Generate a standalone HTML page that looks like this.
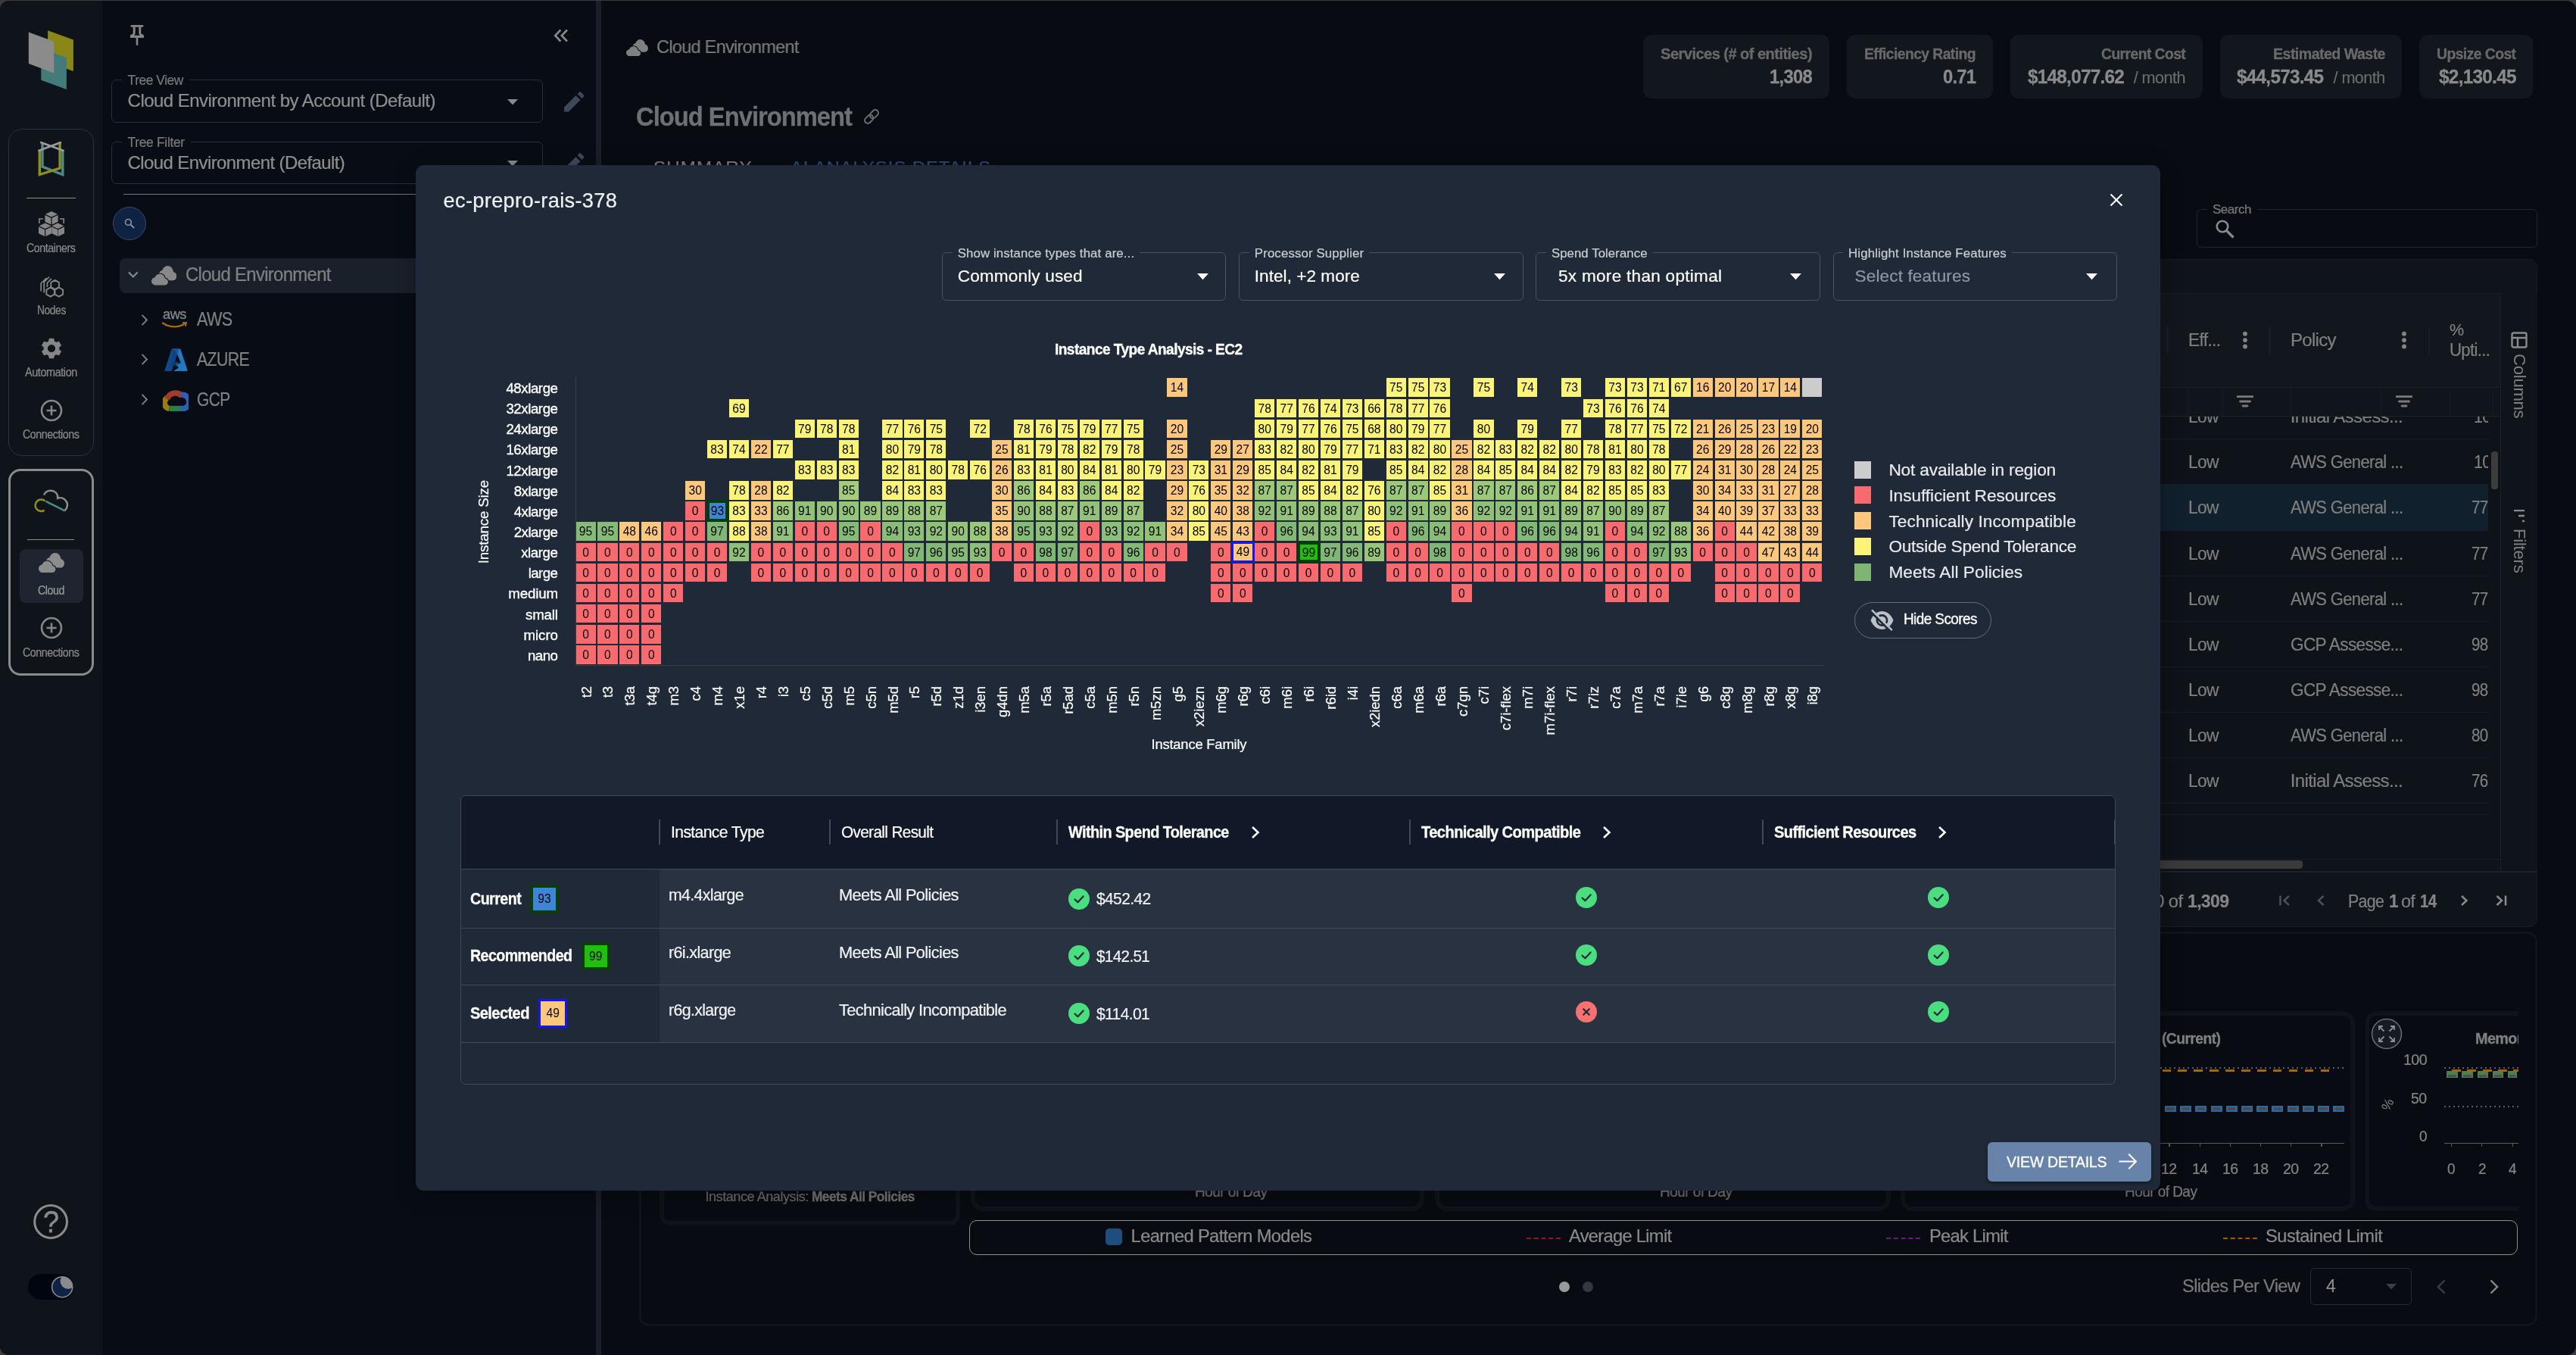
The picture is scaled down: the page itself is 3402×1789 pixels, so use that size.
<!DOCTYPE html>
<html lang="en"><head><meta charset="utf-8"><title>Cloud Environment</title><style>
html,body{margin:0;padding:0}
body{width:3402px;height:1789px;overflow:hidden;background:#3b3b3b;font-family:"Liberation Sans",sans-serif;position:relative}
#win{position:absolute;left:0;top:1px;width:3402px;height:1788px;border-radius:12px;overflow:hidden;background:#080b12}
#inner{position:absolute;left:0;top:-1px;width:3402px;height:1789px;will-change:transform}
.t{position:absolute;white-space:nowrap;line-height:1;color:#fff}
.b{position:absolute;display:block}
.rl{writing-mode:vertical-rl;transform:rotate(180deg);color:#fff}
.c{position:absolute;width:26.3px;height:24.6px;line-height:26.2px;text-align:center;font-size:15.6px;color:#000;box-sizing:border-box}
.c.cur{width:29.6px;height:29px;border:4px solid #063c06;line-height:22.4px}
.c.sel{width:30.8px;height:27.5px;border:3px solid #1515f5;line-height:22.6px}
.bd{position:absolute;box-sizing:border-box;width:37.5px;height:37.5px;text-align:center;color:#000;font-size:15.6px;line-height:30.5px}
</style></head><body>
<div id="win"><div id="inner">
<div class="b" style="left:0.0px;top:0.0px;width:135.0px;height:1789.0px;background:#0f141a;"></div>
<svg class="b" style="left:30.0px;top:34.0px;" width="80.0" height="92.0" viewBox="0 0 80 92"><polygon points="33.1,6.2 66.9,18.4 66.9,60 33.1,47.7" fill="#8a8617"/><polygon points="24.3,29.8 57.9,42.1 57.9,84.1 24.3,71.8" fill="#437b7b"/><polygon points="7.8,8.5 41.3,20.8 41.3,62.4 7.8,49.9" fill="#8b8b8b"/></svg>
<div class="b" style="left:11.4px;top:170.0px;width:112.3px;height:432.0px;border:1px solid #2c323b;border-radius:18px;box-sizing:border-box;"></div>
<svg class="b" style="left:48.0px;top:184.0px;" width="40.0" height="52.0" viewBox="0 0 40 52"><g fill="none" stroke-linejoin="miter"><path d="M8 4.5V36L34.8 46.5V14.5" stroke="#4d8b8b" stroke-width="3.4"/><path d="M4.3 14.5V46.5L31.1 38V4.5" stroke="#8f8f1c" stroke-width="3.4"/><path d="M5.2 3.8L36.6 15.2M32.9 3.8L2.4 15.2" stroke="#9c9c9c" stroke-width="2.6"/></g></svg>
<div class="b" style="left:34.7px;top:261.0px;width:65.3px;height:1.2px;background:#8e8e8e;"></div>
<svg class="b" style="left:50.5px;top:279.0px;" width="34.0" height="33.3" viewBox="0 0 34 33.3"><g fill="#868686"><path d="M17 0L25 3.8L17 7.6L9 3.8Z"/><path d="M8.4 5L16.4 8.8V17.5L8.4 13.7Z"/><path d="M25.6 5L17.6 8.8V17.5L25.6 13.7Z"/>
<path d="M8.6 15.5L16.6 19.3L8.6 23.1L0.6 19.3Z"/><path d="M0 20.5L8 24.3V33L0 29.2Z"/><path d="M17.2 20.5L9.2 24.3V33L17.2 29.2Z"/>
<path d="M25.4 15.5L33.4 19.3L25.4 23.1L17.4 19.3Z"/><path d="M16.8 20.5L24.8 24.3V33L16.8 29.2Z" transform="translate(0.6 0)"/><path d="M34 20.5L26 24.3V33L34 29.2Z"/>
<path d="M0.8 16V10H6" fill="none" stroke="#868686" stroke-width="1.6"/><path d="M33.2 16V10H28" fill="none" stroke="#868686" stroke-width="1.6"/></g></svg>
<div class="t" style="left:35.2px;top:320.23px;font-size:15.75px;color:#8a8a8a;letter-spacing:-0.47px;transform:scaleX(0.9024);transform-origin:0 0;-webkit-text-stroke:0.22px #8a8a8a;">Containers</div>
<svg class="b" style="left:50.0px;top:362.0px;" width="36.0" height="32.0" viewBox="0 0 36 32"><g fill="none" stroke="#868686" stroke-width="1.9" stroke-linejoin="round"><path d="M22.6 7.9L27.9 10.9L27.9 17.0L22.6 20.1L17.3 17.1L17.3 10.9Z"/><path d="M16.6 17.5L21.9 20.6L21.9 26.7L16.6 29.7L11.3 26.7L11.3 20.6Z"/><path d="M27.8 17.5L33.1 20.6L33.1 26.7L27.8 29.7L22.5 26.7L22.5 20.6Z"/><path d="M11.5 5.2L4.2 12V22.5M15 3.5L8.2 10.5V24.5M18 5.8L12.4 11.5V17" stroke-width="1.7"/></g></svg>
<div class="t" style="left:48.6px;top:402.12px;font-size:15.75px;color:#8a8a8a;letter-spacing:-0.47px;transform:scaleX(0.8777);transform-origin:0 0;-webkit-text-stroke:0.22px #8a8a8a;">Nodes</div>
<svg class="b" style="left:52.0px;top:444.0px;" width="32.0" height="32.0" viewBox="0 0 32 32"><path d="M13.46 3.46L18.54 3.46L19.15 6.80L22.39 8.67L25.59 7.53L28.14 11.93L25.55 14.13L25.55 17.87L28.14 20.07L25.59 24.47L22.39 23.33L19.15 25.20L18.54 28.54L13.46 28.54L12.85 25.20L9.61 23.33L6.41 24.47L3.86 20.07L6.45 17.87L6.45 14.13L3.86 11.93L6.41 7.53L9.61 8.67L12.85 6.80Z" fill="#868686" stroke="#868686" stroke-width="1.5" stroke-linejoin="round"/><circle cx="16" cy="16" r="5.12" fill="#0f141a"/></svg>
<div class="t" style="left:33.1px;top:484.23px;font-size:15.75px;color:#8a8a8a;letter-spacing:-0.47px;transform:scaleX(0.9188);transform-origin:0 0;-webkit-text-stroke:0.22px #8a8a8a;">Automation</div>
<svg class="b" style="left:51.8px;top:526.0px;" width="32.0" height="32.0" viewBox="0 0 32 32"><circle cx="16" cy="16" r="13" fill="none" stroke="#868686" stroke-width="2.6"/><path d="M16 9.5V22.5M9.5 16H22.5" stroke="#868686" stroke-width="2.6"/></svg>
<div class="t" style="left:30.2px;top:566.02px;font-size:15.75px;color:#8a8a8a;letter-spacing:-0.47px;transform:scaleX(0.9042);transform-origin:0 0;-webkit-text-stroke:0.22px #8a8a8a;">Connections</div>
<div class="b" style="left:11.0px;top:619.3px;width:112.6px;height:272.7px;border:3px solid #8b8b8b;border-radius:16px;box-sizing:border-box;"></div>
<svg class="b" style="left:42.0px;top:644.0px;" width="52.0" height="36.0" viewBox="0 0 52 36"><g fill="none" stroke-width="2.5" stroke-linecap="butt"><path d="M16.0 9.6C18.0 5.0 22.0 3.6 25.5 3.8C31.0 4.2 34.5 8.0 34.2 13.8C38.0 12.3 42.5 14.0 45.3 17.5C48.3 21.5 47.0 27.0 43.3 30.4" stroke="#8d8d8d"/><path d="M18.5 17.8L43.6 30.4" stroke="#4d8b8b"/><path d="M17.6 17.6A7.7 7.7 0 1 0 16.6 29.6" stroke="#8f8f1c"/></g></svg>
<div class="b" style="left:36.0px;top:712.0px;width:62.0px;height:1.2px;background:#8e8e8e;"></div>
<div class="b" style="left:26.0px;top:725.0px;width:84.0px;height:71.0px;background:#1e2530;border-radius:8px;"></div>
<svg class="b" style="left:50.5px;top:730.0px;" width="34.0" height="26.0" viewBox="0 0 34.0 26.0"><g transform="scale(1.0000)"><g fill="#8c8c8c"><g transform="translate(9.5 0) scale(1.02 1.22)"><path transform="translate(0 0) scale(1)" d="M6 16C2.7 16 0 13.5 0 10.4C0 7.6 2.1 5.3 4.9 4.9C6 2 8.8 0 12 0C15.9 0 19.1 2.9 19.6 6.6C22.1 7 24 9 24 11.4C24 14 21.8 16 19.2 16Z"/></g></g><g fill="#8c8c8c" stroke="#1e2530" stroke-width="2.6" paint-order="stroke"><g transform="translate(0 10.8) scale(0.93 0.95)"><path transform="translate(0 0) scale(1)" d="M6 16C2.7 16 0 13.5 0 10.4C0 7.6 2.1 5.3 4.9 4.9C6 2 8.8 0 12 0C15.9 0 19.1 2.9 19.6 6.6C22.1 7 24 9 24 11.4C24 14 21.8 16 19.2 16Z"/></g></g></g></svg>
<div class="t" style="left:50.0px;top:772.23px;font-size:15.75px;color:#9a9a9a;letter-spacing:-0.47px;transform:scaleX(0.9042);transform-origin:0 0;-webkit-text-stroke:0.22px #9a9a9a;">Cloud</div>
<svg class="b" style="left:51.8px;top:812.6px;" width="32.0" height="32.0" viewBox="0 0 32 32"><circle cx="16" cy="16" r="13" fill="none" stroke="#868686" stroke-width="2.6"/><path d="M16 9.5V22.5M9.5 16H22.5" stroke="#868686" stroke-width="2.6"/></svg>
<div class="t" style="left:30.2px;top:854.02px;font-size:15.75px;color:#8a8a8a;letter-spacing:-0.47px;transform:scaleX(0.9042);transform-origin:0 0;-webkit-text-stroke:0.22px #8a8a8a;">Connections</div>
<svg class="b" style="left:43.0px;top:1589.0px;" width="48.0" height="48.0" viewBox="0 0 48 48"><circle cx="24.1" cy="24" r="21.4" fill="none" stroke="#8b8b8b" stroke-width="3"/></svg>
<div class="t" style="left:56.7px;top:1593.85px;font-size:39.9px;color:#8b8b8b;transform:scaleX(0.9524);transform-origin:0 0;-webkit-text-stroke:0.5px #8b8b8b;">?</div>
<div class="b" style="left:36.9px;top:1682.0px;width:60.3px;height:34.0px;background:#01050f;border-radius:17px;"></div>
<svg class="b" style="left:67.0px;top:1684.0px;" width="31.0" height="31.0" viewBox="0 0 31 31"><defs><clipPath id="tc"><circle cx="15.2" cy="15.2" r="13.6"/></clipPath></defs><circle cx="15.2" cy="15.2" r="13.6" fill="#0e2345"/><circle cx="22.8" cy="7.6" r="10.2" fill="#8b8b8b" clip-path="url(#tc)"/><circle cx="15.2" cy="15.2" r="13.5" fill="none" stroke="#8b8b8b" stroke-width="1.6"/></svg>
<div class="b" style="left:135.0px;top:0.0px;width:652.3px;height:1789.0px;background:#080c14;"></div>
<div class="b" style="left:787.3px;top:0.0px;width:6.7px;height:1789.0px;background:#191e28;"></div>
<svg class="b" style="left:169.0px;top:31.0px;" width="24.0" height="32.0" viewBox="0 0 24 32"><g fill="none" stroke="#878787" stroke-width="2.9" stroke-linecap="round"><path d="M5 3.4H19"/><path d="M8.2 4.5V12.5C8.2 14.4 6.8 15.6 3.6 16.6M15.8 4.5V12.5C15.8 14.4 17.2 15.6 20.4 16.6" stroke-linecap="butt"/><path d="M3 17.3H21" stroke-linecap="butt" stroke-width="3.2"/></g><path d="M10.7 18.5H13.3V27.6L12 29.8L10.7 27.6Z" fill="#878787"/></svg>
<svg class="b" style="left:729.0px;top:37.0px;" width="26.0" height="20.0" viewBox="0 0 26 20"><path d="M11.4 2.5L4.2 10L11.4 17.5M20 2.5L12.8 10L20 17.5" fill="none" stroke="#888" stroke-width="2.6"/></svg>
<div class="b" style="left:146.9px;top:105.3px;width:569.9px;height:56.5px;border:1px solid #2a3039;border-radius:7px;box-sizing:border-box;"></div>
<div class="b" style="left:161.0px;top:103.3px;width:89.4px;height:5.0px;background:#080c14;"></div>
<div class="t" style="left:168.6px;top:98.18px;font-size:17.43px;color:#787878;letter-spacing:-0.46px;-webkit-text-stroke:0.22px #787878;">Tree View</div>
<div class="t" style="left:168.6px;top:121.30px;font-size:24px;color:#8f8f8f;letter-spacing:-0.54px;-webkit-text-stroke:0.22px #8f8f8f;">Cloud Environment by Account (Default)</div>
<svg class="b" style="left:669.5px;top:131.0px;" width="14.0" height="8.0" viewBox="0 0 14 8"><path d="M0 0H14L7 7.5Z" fill="#8a8a8a"/></svg>
<div class="b" style="left:146.9px;top:187.1px;width:569.9px;height:56.3px;border:1px solid #2a3039;border-radius:7px;box-sizing:border-box;"></div>
<div class="b" style="left:161.0px;top:185.1px;width:91.2px;height:5.0px;background:#080c14;"></div>
<div class="t" style="left:168.6px;top:179.99px;font-size:17.43px;color:#787878;letter-spacing:-0.32px;-webkit-text-stroke:0.22px #787878;">Tree Filter</div>
<div class="t" style="left:168.6px;top:203.40px;font-size:24px;color:#8f8f8f;letter-spacing:-0.60px;-webkit-text-stroke:0.22px #8f8f8f;">Cloud Environment (Default)</div>
<svg class="b" style="left:669.5px;top:212.0px;" width="14.0" height="8.0" viewBox="0 0 14 8"><path d="M0 0H14L7 7.5Z" fill="#8a8a8a"/></svg>
<svg class="b" style="left:744.5px;top:120.5px;" width="27.0" height="27.0" viewBox="0 0 27 27"><path d="M0 26.5V20.5L15.5 5L21.5 11L6 26.5Z M17.5 3L20 0.5Q21 -0.3 22 0.5L26 4.5Q26.8 5.5 26 6.5L23.5 9Z" fill="#3d4859"/></svg>
<svg class="b" style="left:744.5px;top:202.0px;" width="27.0" height="27.0" viewBox="0 0 27 27"><path d="M0 26.5V20.5L15.5 5L21.5 11L6 26.5Z M17.5 3L20 0.5Q21 -0.3 22 0.5L26 4.5Q26.8 5.5 26 6.5L23.5 9Z" fill="#3d4859"/></svg>
<div class="b" style="left:162.9px;top:255.7px;width:553.9px;height:1.3px;background:#777;"></div>
<div class="b" style="left:149.2px;top:273.0px;width:44.2px;height:44.4px;background:#0e2244;border:1px solid #3b4a64;border-radius:23px;box-sizing:border-box;"></div>
<svg class="b" style="left:164.3px;top:288.0px;" width="15.0" height="15.0" viewBox="0 0 15 15"><circle cx="5.4" cy="5.4" r="3.9" fill="none" stroke="#8d939d" stroke-width="1.6"/><path d="M8.4 8.4L13 13" stroke="#8d939d" stroke-width="1.9"/></svg>
<div class="b" style="left:158.0px;top:341.0px;width:642.0px;height:45.5px;background:#1a202a;border-radius:8px;"></div>
<svg class="b" style="left:168.0px;top:356.0px;" width="16.0" height="14.0" viewBox="0 0 16 14"><path d="M2 3.5L7.8 9.5L13.6 3.5" fill="none" stroke="#8a8a8a" stroke-width="2.2"/></svg>
<svg class="b" style="left:199.8px;top:351.0px;" width="33.5" height="25.6" viewBox="0 0 33.5 25.6"><g transform="scale(0.9853)"><g fill="#888"><g transform="translate(9.5 0) scale(1.02 1.22)"><path transform="translate(0 0) scale(1)" d="M6 16C2.7 16 0 13.5 0 10.4C0 7.6 2.1 5.3 4.9 4.9C6 2 8.8 0 12 0C15.9 0 19.1 2.9 19.6 6.6C22.1 7 24 9 24 11.4C24 14 21.8 16 19.2 16Z"/></g></g><g fill="#888" stroke="#1a202a" stroke-width="2.6" paint-order="stroke"><g transform="translate(0 10.8) scale(0.93 0.95)"><path transform="translate(0 0) scale(1)" d="M6 16C2.7 16 0 13.5 0 10.4C0 7.6 2.1 5.3 4.9 4.9C6 2 8.8 0 12 0C15.9 0 19.1 2.9 19.6 6.6C22.1 7 24 9 24 11.4C24 14 21.8 16 19.2 16Z"/></g></g></g></svg>
<div class="t" style="left:244.8px;top:350.30px;font-size:25.2px;color:#808080;letter-spacing:-0.76px;transform:scaleX(0.9524);transform-origin:0 0;-webkit-text-stroke:0.22px #808080;">Cloud Environment</div>
<svg class="b" style="left:185.0px;top:413.8px;" width="12.0" height="17.0" viewBox="0 0 12 17"><path d="M2.6 1.8L9 8.5L2.6 15.2" fill="none" stroke="#808080" stroke-width="1.9"/></svg>
<div class="t" style="left:259.9px;top:408.80px;font-size:25.2px;color:#808080;letter-spacing:-0.76px;transform:scaleX(0.8607);transform-origin:0 0;-webkit-text-stroke:0.22px #808080;">AWS</div>
<svg class="b" style="left:185.0px;top:466.0px;" width="12.0" height="17.0" viewBox="0 0 12 17"><path d="M2.6 1.8L9 8.5L2.6 15.2" fill="none" stroke="#808080" stroke-width="1.9"/></svg>
<div class="t" style="left:259.9px;top:462.00px;font-size:25.2px;color:#808080;letter-spacing:-0.76px;transform:scaleX(0.8484);transform-origin:0 0;-webkit-text-stroke:0.22px #808080;">AZURE</div>
<svg class="b" style="left:185.0px;top:519.0px;" width="12.0" height="17.0" viewBox="0 0 12 17"><path d="M2.6 1.8L9 8.5L2.6 15.2" fill="none" stroke="#808080" stroke-width="1.9"/></svg>
<div class="t" style="left:259.9px;top:514.90px;font-size:25.2px;color:#808080;letter-spacing:-0.76px;transform:scaleX(0.8324);transform-origin:0 0;-webkit-text-stroke:0.22px #808080;">GCP</div>
<div class="t" style="left:214.9px;top:406.45px;font-size:18.9px;color:#858585;letter-spacing:-0.57px;transform:scaleX(0.9699);transform-origin:0 0;-webkit-text-stroke:0.35px #858585;">aws</div>
<svg class="b" style="left:214.0px;top:425.3px;" width="34.0" height="10.0" viewBox="0 0 34 10"><path d="M1 1.5C9 7.5 21 8 30 2.5" fill="none" stroke="#a86a14" stroke-width="2.2" stroke-linecap="round"/><path d="M27 1.2L32 1L31 6" fill="none" stroke="#a86a14" stroke-width="1.8"/></svg>
<svg class="b" style="left:216.5px;top:460.4px;" width="31.0" height="30.5" viewBox="0 0 31 30.5"><path d="M10.5 0.5H19.5L10 29Q9.7 30 8.7 30H1.5Q0.2 30 0.7 28.6L9.5 1.5Q9.8 0.5 10.5 0.5Z" fill="#114a8b"/><path d="M11.5 0.5H20.5Q21.3 0.5 21.6 1.5L30.5 28.6Q30.9 30 29.5 30H12L19 25.5L13.5 19.5H22L16.5 6Z" fill="#2378c2" transform="translate(0 0)"/><path d="M10.5 0.5H19.5L14.8 14.5L20.5 21L8.5 25.5Z" fill="#0f3f77" opacity=".6"/></svg>
<svg class="b" style="left:215.0px;top:514.5px;" width="34.0" height="28.0" viewBox="0 0 34 28"><g fill="none" stroke-width="7.4"><path d="M8.5 24.5A7.8 7.8 0 0 1 5.5 10.5" stroke="#9c7b12"/><path d="M5.8 12A11.5 11.5 0 0 1 25.5 8" stroke="#a33a2e"/><path d="M24 6.5A9 9 0 0 1 27.5 24.5H22" stroke="#2f5fb0" /><path d="M8.5 24.5H23" stroke="#2a7f45"/></g></svg>
<svg class="b" style="left:826.5px;top:51.5px;" width="29.0" height="22.2" viewBox="0 0 29.0 22.2"><g transform="scale(0.8529)"><g fill="#808080"><g transform="translate(9.5 0) scale(1.02 1.22)"><path transform="translate(0 0) scale(1)" d="M6 16C2.7 16 0 13.5 0 10.4C0 7.6 2.1 5.3 4.9 4.9C6 2 8.8 0 12 0C15.9 0 19.1 2.9 19.6 6.6C22.1 7 24 9 24 11.4C24 14 21.8 16 19.2 16Z"/></g></g><g fill="#808080" stroke="#080b12" stroke-width="2.6" paint-order="stroke"><g transform="translate(0 10.8) scale(0.93 0.95)"><path transform="translate(0 0) scale(1)" d="M6 16C2.7 16 0 13.5 0 10.4C0 7.6 2.1 5.3 4.9 4.9C6 2 8.8 0 12 0C15.9 0 19.1 2.9 19.6 6.6C22.1 7 24 9 24 11.4C24 14 21.8 16 19.2 16Z"/></g></g></g></svg>
<div class="t" style="left:867.1px;top:51.33px;font-size:23.73px;color:#7c7c7c;letter-spacing:-0.71px;transform:scaleX(0.9899);transform-origin:0 0;-webkit-text-stroke:0.22px #7c7c7c;">Cloud Environment</div>
<div class="t" style="left:839.5px;top:136.60px;font-size:34.4px;color:#6d7075;letter-spacing:-1.03px;transform:scaleX(0.9510);transform-origin:0 0;font-weight:700;-webkit-text-stroke:0.3px #6d7075;">Cloud Environment</div>
<svg class="b" style="left:1139.0px;top:142.0px;" width="24.0" height="24.0" viewBox="0 0 24 24"><g fill="none" stroke="#6d7075" stroke-width="1.9" transform="rotate(-45 12 12)"><rect x="1" y="8" width="12.5" height="8" rx="4"/><rect x="10.5" y="8" width="12.5" height="8" rx="4"/></g></svg>
<div class="t" style="left:862.7px;top:210.41px;font-size:22.37px;color:#7b7b7b;letter-spacing:1.12px;transform:scaleX(1.0733);transform-origin:0 0;-webkit-text-stroke:0.22px #7b7b7b;">SUMMARY</div>
<div class="t" style="left:1043.5px;top:210.41px;font-size:22.37px;color:#2b4c74;letter-spacing:1.12px;transform:scaleX(1.0484);transform-origin:0 0;-webkit-text-stroke:0.22px #2b4c74;">AI ANALYSIS DETAILS</div>
<div class="b" style="left:2170.3px;top:46.0px;width:245.6px;height:84.0px;background:#12161d;border-radius:11px;"></div>
<div class="t" style="left:2193.0px;top:61.11px;font-size:20.58px;color:#696969;letter-spacing:-0.62px;transform:scaleX(0.9825);transform-origin:0 0;font-weight:700;-webkit-text-stroke:0.3px #696969;">Services (# of entities)</div>
<div class="t" style="left:2337.0px;top:88.50px;font-size:25.2px;color:#8a8a8a;letter-spacing:-0.76px;transform:scaleX(0.9444);transform-origin:0 0;font-weight:700;-webkit-text-stroke:0.3px #8a8a8a;">1,308</div>
<div class="b" style="left:2439.1px;top:46.0px;width:192.6px;height:84.0px;background:#12161d;border-radius:11px;"></div>
<div class="t" style="left:2461.9px;top:61.11px;font-size:20.58px;color:#696969;letter-spacing:-0.62px;transform:scaleX(0.9396);transform-origin:0 0;font-weight:700;-webkit-text-stroke:0.3px #696969;">Efficiency Rating</div>
<div class="t" style="left:2565.5px;top:88.50px;font-size:25.2px;color:#8a8a8a;letter-spacing:-0.76px;transform:scaleX(0.9406);transform-origin:0 0;font-weight:700;-webkit-text-stroke:0.3px #8a8a8a;">0.71</div>
<div class="b" style="left:2655.0px;top:46.0px;width:253.7px;height:84.0px;background:#12161d;border-radius:11px;"></div>
<div class="t" style="left:2774.7px;top:61.11px;font-size:20.58px;color:#696969;letter-spacing:-0.62px;transform:scaleX(0.9396);transform-origin:0 0;font-weight:700;-webkit-text-stroke:0.3px #696969;">Current Cost</div>
<div class="t" style="left:2817.7px;top:91.78px;font-size:21.63px;color:#6a6a6a;letter-spacing:-0.56px;-webkit-text-stroke:0.22px #6a6a6a;">/ month</div>
<div class="t" style="left:2677.7px;top:88.50px;font-size:25.2px;color:#8a8a8a;letter-spacing:-0.76px;transform:scaleX(0.9647);transform-origin:0 0;font-weight:700;-webkit-text-stroke:0.3px #8a8a8a;">$148,077.62</div>
<div class="b" style="left:2931.9px;top:46.0px;width:240.6px;height:84.0px;background:#12161d;border-radius:11px;"></div>
<div class="t" style="left:3001.7px;top:61.11px;font-size:20.58px;color:#696969;letter-spacing:-0.62px;transform:scaleX(0.9569);transform-origin:0 0;font-weight:700;-webkit-text-stroke:0.3px #696969;">Estimated Waste</div>
<div class="t" style="left:3081.5px;top:91.78px;font-size:21.63px;color:#6a6a6a;letter-spacing:-0.56px;-webkit-text-stroke:0.22px #6a6a6a;">/ month</div>
<div class="t" style="left:2954.2px;top:88.50px;font-size:25.2px;color:#8a8a8a;letter-spacing:-0.76px;transform:scaleX(0.9655);transform-origin:0 0;font-weight:700;-webkit-text-stroke:0.3px #8a8a8a;">$44,573.45</div>
<div class="b" style="left:3195.3px;top:46.0px;width:150.1px;height:84.0px;background:#12161d;border-radius:11px;"></div>
<div class="t" style="left:3218.1px;top:61.11px;font-size:20.58px;color:#696969;letter-spacing:-0.62px;transform:scaleX(0.9417);transform-origin:0 0;font-weight:700;-webkit-text-stroke:0.3px #696969;">Upsize Cost</div>
<div class="t" style="left:3220.6px;top:88.50px;font-size:25.2px;color:#8a8a8a;letter-spacing:-0.76px;transform:scaleX(0.9674);transform-origin:0 0;font-weight:700;-webkit-text-stroke:0.3px #8a8a8a;">$2,130.45</div>
<div class="b" style="left:2901.0px;top:276.0px;width:450.0px;height:50.5px;border:1px solid #20252e;border-radius:6px;box-sizing:border-box;"></div>
<div class="b" style="left:2915.0px;top:274.0px;width:66.0px;height:6.0px;background:#080b12;"></div>
<div class="t" style="left:2922.3px;top:267.99px;font-size:17.22px;color:#7a7a7a;letter-spacing:-0.52px;transform:scaleX(0.9927);transform-origin:0 0;font-weight:500;-webkit-text-stroke:0.22px #7a7a7a;">Search</div>
<svg class="b" style="left:2925.0px;top:289.0px;" width="28.0" height="26.0" viewBox="0 0 28 26"><circle cx="10" cy="10" r="7.3" fill="none" stroke="#8a8a8a" stroke-width="2.6"/><path d="M15.5 15.5L24.5 24.5" stroke="#8a8a8a" stroke-width="3.2"/></svg>
<div class="b" style="left:845.8px;top:342.2px;width:2505.2px;height:881.4px;background:#0f131a;border:1px solid #181c24;border-radius:11px;box-sizing:border-box;"></div>
<div class="b" style="left:845.8px;top:387.0px;width:2455.8px;height:124.0px;background:#12161d;"></div>
<div class="b" style="left:845.8px;top:386.5px;width:2505.2px;height:1.0px;background:#171c24;"></div>
<div class="b" style="left:845.8px;top:510.5px;width:2455.8px;height:1.0px;background:#1b2029;"></div>
<div class="b" style="left:845.8px;top:511.5px;width:2455.8px;height:37.5px;background:#10141b;"></div>
<div class="b" style="left:845.8px;top:549.0px;width:2455.8px;height:1.0px;background:#1f242c;"></div>
<div class="b" style="left:845.8px;top:550.0px;width:2455.8px;height:584.0px;background:#0e1219;"></div>
<div class="b" style="left:845.8px;top:639.5px;width:2440.7px;height:60.1px;background:#10202c;"></div>
<div class="b" style="left:845.8px;top:579.0px;width:2441.2px;height:1.0px;background:#171c25;"></div>
<div class="b" style="left:845.8px;top:639.0px;width:2441.2px;height:1.0px;background:#171c25;"></div>
<div class="b" style="left:845.8px;top:699.6px;width:2441.2px;height:1.0px;background:#171c25;"></div>
<div class="b" style="left:845.8px;top:759.6px;width:2441.2px;height:1.0px;background:#171c25;"></div>
<div class="b" style="left:845.8px;top:819.7px;width:2441.2px;height:1.0px;background:#171c25;"></div>
<div class="b" style="left:845.8px;top:879.7px;width:2441.2px;height:1.0px;background:#171c25;"></div>
<div class="b" style="left:845.8px;top:939.6px;width:2441.2px;height:1.0px;background:#171c25;"></div>
<div class="b" style="left:845.8px;top:999.7px;width:2441.2px;height:1.0px;background:#171c25;"></div>
<div class="b" style="left:845.8px;top:1059.8px;width:2441.2px;height:1.0px;background:#171c25;"></div>
<div class="b" style="left:845.8px;top:1074.8px;width:2441.2px;height:1.0px;background:#171c25;"></div>
<div class="b" style="left:3301.6px;top:387.0px;width:1.0px;height:763.0px;background:#1a1f27;"></div>
<div class="b" style="left:3302.6px;top:387.0px;width:48.4px;height:763.0px;background:#0f131a;"></div>
<div class="t" style="left:2890.2px;top:437.03px;font-size:24.15px;color:#7f7f7f;letter-spacing:-0.72px;transform:scaleX(0.9431);transform-origin:0 0;-webkit-text-stroke:0.22px #7f7f7f;">Eff...</div>
<div class="t" style="left:3024.8px;top:437.03px;font-size:24.15px;color:#7f7f7f;letter-spacing:-0.72px;transform:scaleX(0.9951);transform-origin:0 0;-webkit-text-stroke:0.22px #7f7f7f;">Policy</div>
<div class="t" style="left:3234.9px;top:424.81px;font-size:22.57px;color:#7f7f7f;transform:scaleX(0.9526);transform-origin:0 0;-webkit-text-stroke:0.22px #7f7f7f;">%</div>
<div class="t" style="left:3234.9px;top:450.03px;font-size:24.15px;color:#7f7f7f;letter-spacing:-0.72px;transform:scaleX(0.9195);transform-origin:0 0;-webkit-text-stroke:0.22px #7f7f7f;">Upti...</div>
<svg class="b" style="left:2960.5px;top:437.0px;" width="8.0" height="26.0" viewBox="0 0 8 26"><circle cx="4" cy="3.7" r="2.9" fill="#858585"/><circle cx="4" cy="12.1" r="2.9" fill="#858585"/><circle cx="4" cy="20.5" r="2.9" fill="#858585"/></svg>
<svg class="b" style="left:2953.5px;top:522.0px;" width="22.0" height="16.0" viewBox="0 0 22 16"><path d="M0.5 1.6H21.5M4.5 8H17.5M8 14H14" stroke="#7a7a7a" stroke-width="2.8" stroke-linecap="round"/></svg>
<svg class="b" style="left:3170.7px;top:437.0px;" width="8.0" height="26.0" viewBox="0 0 8 26"><circle cx="4" cy="3.7" r="2.9" fill="#858585"/><circle cx="4" cy="12.1" r="2.9" fill="#858585"/><circle cx="4" cy="20.5" r="2.9" fill="#858585"/></svg>
<svg class="b" style="left:3163.7px;top:522.0px;" width="22.0" height="16.0" viewBox="0 0 22 16"><path d="M0.5 1.6H21.5M4.5 8H17.5M8 14H14" stroke="#7a7a7a" stroke-width="2.8" stroke-linecap="round"/></svg>
<div class="b" style="left:2861.3px;top:431.0px;width:2.5px;height:36.0px;background:#191d25;"></div>
<div class="b" style="left:2996.0px;top:431.0px;width:2.5px;height:36.0px;background:#191d25;"></div>
<div class="b" style="left:3206.5px;top:431.0px;width:2.5px;height:36.0px;background:#191d25;"></div>
<div class="b" style="left:2890.0px;top:512.0px;width:1.0px;height:37.0px;background:#171c25;"></div>
<div class="b" style="left:2934.5px;top:512.0px;width:1.0px;height:37.0px;background:#171c25;"></div>
<div class="b" style="left:3025.0px;top:512.0px;width:1.0px;height:37.0px;background:#171c25;"></div>
<div class="b" style="left:3144.0px;top:512.0px;width:1.0px;height:37.0px;background:#171c25;"></div>
<div class="b" style="left:3235.0px;top:512.0px;width:1.0px;height:37.0px;background:#171c25;"></div>
<div class="b" style="left:3292.0px;top:512.0px;width:1.0px;height:37.0px;background:#171c25;"></div>
<div class="b" style="left:2853px;top:550px;width:432.8px;height:585px;overflow:hidden">
<div class="t" style="left:37.2px;top:-11.78px;font-size:24.15px;color:#7f7f7f;letter-spacing:-0.72px;transform:scaleX(0.9450);transform-origin:0 0;-webkit-text-stroke:0.22px #7f7f7f;">Low</div>
<div class="t" style="left:171.8px;top:-11.78px;font-size:24.15px;color:#7f7f7f;letter-spacing:-0.67px;-webkit-text-stroke:0.22px #7f7f7f;">Initial Assess...</div>
<div class="t" style="left:413.6px;top:-11.78px;font-size:24.15px;color:#7f7f7f;letter-spacing:-0.72px;transform:scaleX(0.8881);transform-origin:0 0;-webkit-text-stroke:0.22px #7f7f7f;">100</div>
<div class="t" style="left:37.2px;top:48.32px;font-size:24.15px;color:#7f7f7f;letter-spacing:-0.72px;transform:scaleX(0.9450);transform-origin:0 0;-webkit-text-stroke:0.22px #7f7f7f;">Low</div>
<div class="t" style="left:171.8px;top:48.32px;font-size:24.15px;color:#7f7f7f;letter-spacing:-0.72px;transform:scaleX(0.9117);transform-origin:0 0;-webkit-text-stroke:0.22px #7f7f7f;">AWS General ...</div>
<div class="t" style="left:413.6px;top:48.32px;font-size:24.15px;color:#7f7f7f;letter-spacing:-0.72px;transform:scaleX(0.8881);transform-origin:0 0;-webkit-text-stroke:0.22px #7f7f7f;">100</div>
<div class="t" style="left:37.2px;top:108.42px;font-size:24.15px;color:#7f7f7f;letter-spacing:-0.72px;transform:scaleX(0.9450);transform-origin:0 0;-webkit-text-stroke:0.22px #7f7f7f;">Low</div>
<div class="t" style="left:171.8px;top:108.42px;font-size:24.15px;color:#7f7f7f;letter-spacing:-0.72px;transform:scaleX(0.9117);transform-origin:0 0;-webkit-text-stroke:0.22px #7f7f7f;">AWS General ...</div>
<div class="t" style="left:410.6px;top:108.42px;font-size:24.15px;color:#7f7f7f;letter-spacing:-0.72px;transform:scaleX(0.8493);transform-origin:0 0;-webkit-text-stroke:0.22px #7f7f7f;">77</div>
<div class="t" style="left:37.2px;top:168.53px;font-size:24.15px;color:#7f7f7f;letter-spacing:-0.72px;transform:scaleX(0.9450);transform-origin:0 0;-webkit-text-stroke:0.22px #7f7f7f;">Low</div>
<div class="t" style="left:171.8px;top:168.53px;font-size:24.15px;color:#7f7f7f;letter-spacing:-0.72px;transform:scaleX(0.9117);transform-origin:0 0;-webkit-text-stroke:0.22px #7f7f7f;">AWS General ...</div>
<div class="t" style="left:410.6px;top:168.53px;font-size:24.15px;color:#7f7f7f;letter-spacing:-0.72px;transform:scaleX(0.8493);transform-origin:0 0;-webkit-text-stroke:0.22px #7f7f7f;">77</div>
<div class="t" style="left:37.2px;top:228.62px;font-size:24.15px;color:#7f7f7f;letter-spacing:-0.72px;transform:scaleX(0.9450);transform-origin:0 0;-webkit-text-stroke:0.22px #7f7f7f;">Low</div>
<div class="t" style="left:171.8px;top:228.62px;font-size:24.15px;color:#7f7f7f;letter-spacing:-0.72px;transform:scaleX(0.9117);transform-origin:0 0;-webkit-text-stroke:0.22px #7f7f7f;">AWS General ...</div>
<div class="t" style="left:410.6px;top:228.62px;font-size:24.15px;color:#7f7f7f;letter-spacing:-0.72px;transform:scaleX(0.8493);transform-origin:0 0;-webkit-text-stroke:0.22px #7f7f7f;">77</div>
<div class="t" style="left:37.2px;top:288.72px;font-size:24.15px;color:#7f7f7f;letter-spacing:-0.72px;transform:scaleX(0.9450);transform-origin:0 0;-webkit-text-stroke:0.22px #7f7f7f;">Low</div>
<div class="t" style="left:171.8px;top:288.72px;font-size:24.15px;color:#7f7f7f;letter-spacing:-0.72px;transform:scaleX(0.9356);transform-origin:0 0;-webkit-text-stroke:0.22px #7f7f7f;">GCP Assesse...</div>
<div class="t" style="left:410.6px;top:288.72px;font-size:24.15px;color:#7f7f7f;letter-spacing:-0.72px;transform:scaleX(0.8493);transform-origin:0 0;-webkit-text-stroke:0.22px #7f7f7f;">98</div>
<div class="t" style="left:37.2px;top:348.82px;font-size:24.15px;color:#7f7f7f;letter-spacing:-0.72px;transform:scaleX(0.9450);transform-origin:0 0;-webkit-text-stroke:0.22px #7f7f7f;">Low</div>
<div class="t" style="left:171.8px;top:348.82px;font-size:24.15px;color:#7f7f7f;letter-spacing:-0.72px;transform:scaleX(0.9356);transform-origin:0 0;-webkit-text-stroke:0.22px #7f7f7f;">GCP Assesse...</div>
<div class="t" style="left:410.6px;top:348.82px;font-size:24.15px;color:#7f7f7f;letter-spacing:-0.72px;transform:scaleX(0.8493);transform-origin:0 0;-webkit-text-stroke:0.22px #7f7f7f;">98</div>
<div class="t" style="left:37.2px;top:408.93px;font-size:24.15px;color:#7f7f7f;letter-spacing:-0.72px;transform:scaleX(0.9450);transform-origin:0 0;-webkit-text-stroke:0.22px #7f7f7f;">Low</div>
<div class="t" style="left:171.8px;top:408.93px;font-size:24.15px;color:#7f7f7f;letter-spacing:-0.72px;transform:scaleX(0.9117);transform-origin:0 0;-webkit-text-stroke:0.22px #7f7f7f;">AWS General ...</div>
<div class="t" style="left:410.6px;top:408.93px;font-size:24.15px;color:#7f7f7f;letter-spacing:-0.72px;transform:scaleX(0.8493);transform-origin:0 0;-webkit-text-stroke:0.22px #7f7f7f;">80</div>
<div class="t" style="left:37.2px;top:469.03px;font-size:24.15px;color:#7f7f7f;letter-spacing:-0.72px;transform:scaleX(0.9450);transform-origin:0 0;-webkit-text-stroke:0.22px #7f7f7f;">Low</div>
<div class="t" style="left:171.8px;top:469.03px;font-size:24.15px;color:#7f7f7f;letter-spacing:-0.67px;-webkit-text-stroke:0.22px #7f7f7f;">Initial Assess...</div>
<div class="t" style="left:410.6px;top:469.03px;font-size:24.15px;color:#7f7f7f;letter-spacing:-0.72px;transform:scaleX(0.8493);transform-origin:0 0;-webkit-text-stroke:0.22px #7f7f7f;">76</div>
</div>
<div class="b" style="left:3289.5px;top:596.0px;width:9.0px;height:50.0px;background:#3c3c3c;border-radius:4px;"></div>
<svg class="b" style="left:3316.0px;top:438.0px;" width="22.0" height="22.0" viewBox="0 0 22 22"><rect x="1.5" y="1.5" width="19" height="19" rx="2" fill="none" stroke="#8a8a8a" stroke-width="2.4"/><path d="M1.5 8H20.5M9 8V20.5" stroke="#8a8a8a" stroke-width="2.4"/></svg>
<div class="t" style="left:3316px;top:467px;font-size:22px;color:#808080;writing-mode:vertical-rl;letter-spacing:-0.2px">Columns</div>
<svg class="b" style="left:3316.0px;top:673.0px;" width="22.0" height="18.0" viewBox="0 0 22 18"><path d="M3 2V16M10 2V10M17 2V5" stroke="#8a8a8a" stroke-width="2.6" transform="rotate(90 11 9) translate(0 0)"/></svg>
<div class="t" style="left:3316px;top:698px;font-size:22px;color:#808080;writing-mode:vertical-rl;letter-spacing:-0.2px">Filters</div>
<div class="b" style="left:845.8px;top:1134.0px;width:2455.8px;height:1.0px;background:#171c25;"></div>
<div class="b" style="left:2700.0px;top:1135.5px;width:341.0px;height:11.5px;background:#3a3a3a;border-radius:4px;"></div>
<div class="b" style="left:845.8px;top:1150.0px;width:2505.2px;height:1.5px;background:#1c212a;"></div>
<div class="t" style="left:2889.0px;top:1178.73px;font-size:23.73px;color:#858585;letter-spacing:-0.71px;transform:scaleX(0.9728);transform-origin:0 0;font-weight:700;-webkit-text-stroke:0.22px #858585;">1,309</div>
<div class="t" style="left:2845.3px;top:1178.73px;font-size:23.73px;color:#808080;letter-spacing:-0.63px;-webkit-text-stroke:0.22px #808080;">0 of</div>
<svg class="b" style="left:3008.5px;top:1180.0px;" width="18.0" height="18.0" viewBox="0 0 18 18"><path d="M2.5 2.5V15.5M14 3L7.5 9L14 15" fill="none" stroke="#4d5056" stroke-width="2.5"/></svg>
<svg class="b" style="left:3057.0px;top:1180.0px;" width="18.0" height="18.0" viewBox="0 0 18 18"><path d="M11.5 3L5 9L11.5 15" fill="none" stroke="#4d5056" stroke-width="2.5"/></svg>
<div class="t" style="left:3101.0px;top:1178.73px;font-size:23.73px;color:#808080;letter-spacing:-0.71px;transform:scaleX(0.9008);transform-origin:0 0;-webkit-text-stroke:0.22px #808080;">Page</div>
<div class="t" style="left:3155.0px;top:1178.73px;font-size:23.73px;color:#858585;transform:scaleX(0.9524);transform-origin:0 0;font-weight:700;-webkit-text-stroke:0.22px #858585;">1</div>
<div class="t" style="left:3170.5px;top:1178.73px;font-size:23.73px;color:#808080;letter-spacing:-0.71px;transform:scaleX(0.9879);transform-origin:0 0;-webkit-text-stroke:0.22px #808080;">of</div>
<div class="t" style="left:3196.0px;top:1178.73px;font-size:23.73px;color:#858585;letter-spacing:-0.71px;transform:scaleX(0.8644);transform-origin:0 0;font-weight:700;-webkit-text-stroke:0.22px #858585;">14</div>
<svg class="b" style="left:3245.0px;top:1180.0px;" width="18.0" height="18.0" viewBox="0 0 18 18"><path d="M6 3L12.5 9L6 15" fill="none" stroke="#8a8a8a" stroke-width="2.5"/></svg>
<svg class="b" style="left:3294.0px;top:1180.0px;" width="18.0" height="18.0" viewBox="0 0 18 18"><path d="M3.5 3L10 9L3.5 15M15 2.5V15.5" fill="none" stroke="#8a8a8a" stroke-width="2.5"/></svg>
<div class="b" style="left:844.3px;top:1229.5px;width:2507.2px;height:521.0px;border:3px solid #10141b;border-radius:13px;box-sizing:border-box;"></div>
<div class="b" style="left:870.5px;top:1300.0px;width:397.5px;height:317.5px;border:6.5px solid #10141a;border-radius:14px;box-sizing:border-box;"></div>
<div class="t" style="left:931.4px;top:1571.07px;font-size:18.06px;color:#696969;letter-spacing:-0.44px;-webkit-text-stroke:0.22px #696969;">Instance Analysis:</div>
<div class="t" style="left:1071.5px;top:1571.07px;font-size:18.06px;color:#727272;letter-spacing:-0.54px;transform:scaleX(0.9566);transform-origin:0 0;font-weight:700;-webkit-text-stroke:0.3px #727272;">Meets All Policies</div>
<div class="b" style="left:1281.5px;top:1335.0px;width:599.5px;height:263.5px;border:6.5px solid #10141a;border-radius:16px;box-sizing:border-box;"></div>
<div class="b" style="left:1894.5px;top:1335.0px;width:602.1px;height:263.5px;border:6.5px solid #10141a;border-radius:16px;box-sizing:border-box;"></div>
<div class="b" style="left:2510.4px;top:1335.0px;width:599.4px;height:263.5px;border:6.5px solid #10141a;border-radius:16px;box-sizing:border-box;"></div>
<div class="b" style="left:3123.4px;top:1335.0px;width:236.6px;height:263.5px;border:6.5px solid #10141a;border-radius:16px;box-sizing:border-box;clip-path:inset(0 34px 0 0);"></div>
<div class="t" style="left:1578.0px;top:1563.62px;font-size:19.95px;color:#777;letter-spacing:-0.60px;transform:scaleX(0.9556);transform-origin:0 0;font-weight:500;-webkit-text-stroke:0.22px #777;">Hour of Day</div>
<div class="t" style="left:2192.0px;top:1563.62px;font-size:19.95px;color:#777;letter-spacing:-0.60px;transform:scaleX(0.9556);transform-origin:0 0;font-weight:500;-webkit-text-stroke:0.22px #777;">Hour of Day</div>
<div class="t" style="left:2805.7px;top:1563.62px;font-size:19.95px;color:#777;letter-spacing:-0.60px;transform:scaleX(0.9556);transform-origin:0 0;font-weight:500;-webkit-text-stroke:0.22px #777;">Hour of Day</div>
<div class="t" style="left:2855.3px;top:1360.81px;font-size:20.58px;color:#808080;letter-spacing:-0.62px;transform:scaleX(0.9387);transform-origin:0 0;font-weight:700;-webkit-text-stroke:0.3px #808080;">(Current)</div>
<div class="b" style="left:2853.0px;top:1409.0px;width:243.0px;height:1.6px;background:repeating-linear-gradient(90deg,#5a5d63 0 1.8px,transparent 1.8px 6px);"></div>
<div class="b" style="left:2855.5px;top:1411.6px;width:11.7px;height:3.0px;background:#a5670b;"></div>
<div class="b" style="left:2876.4px;top:1411.6px;width:11.7px;height:3.0px;background:#a5670b;"></div>
<div class="b" style="left:2897.3px;top:1411.6px;width:11.7px;height:3.0px;background:#a5670b;"></div>
<div class="b" style="left:2918.2px;top:1411.6px;width:11.7px;height:3.0px;background:#a5670b;"></div>
<div class="b" style="left:2939.1px;top:1411.6px;width:11.7px;height:3.0px;background:#a5670b;"></div>
<div class="b" style="left:2960.0px;top:1411.6px;width:11.7px;height:3.0px;background:#a5670b;"></div>
<div class="b" style="left:2980.9px;top:1411.6px;width:11.7px;height:3.0px;background:#a5670b;"></div>
<div class="b" style="left:3001.8px;top:1411.6px;width:11.7px;height:3.0px;background:#a5670b;"></div>
<div class="b" style="left:3022.7px;top:1411.6px;width:11.7px;height:3.0px;background:#a5670b;"></div>
<div class="b" style="left:3043.6px;top:1411.6px;width:11.7px;height:3.0px;background:#a5670b;"></div>
<div class="b" style="left:3064.5px;top:1411.6px;width:11.7px;height:3.0px;background:#a5670b;"></div>
<div class="b" style="left:2859.0px;top:1460.0px;width:15.0px;height:8.0px;background:#2c689a;"></div>
<div class="b" style="left:2861.3px;top:1462.3px;width:10.4px;height:3.5px;background:#474c55;"></div>
<div class="b" style="left:2879.2px;top:1460.0px;width:15.0px;height:8.0px;background:#2c689a;"></div>
<div class="b" style="left:2881.5px;top:1462.3px;width:10.4px;height:3.5px;background:#474c55;"></div>
<div class="b" style="left:2899.4px;top:1460.0px;width:15.0px;height:8.0px;background:#2c689a;"></div>
<div class="b" style="left:2901.7px;top:1462.3px;width:10.4px;height:3.5px;background:#474c55;"></div>
<div class="b" style="left:2919.6px;top:1460.0px;width:15.0px;height:8.0px;background:#2c689a;"></div>
<div class="b" style="left:2921.9px;top:1462.3px;width:10.4px;height:3.5px;background:#474c55;"></div>
<div class="b" style="left:2939.8px;top:1460.0px;width:15.0px;height:8.0px;background:#2c689a;"></div>
<div class="b" style="left:2942.1px;top:1462.3px;width:10.4px;height:3.5px;background:#474c55;"></div>
<div class="b" style="left:2960.0px;top:1460.0px;width:15.0px;height:8.0px;background:#2c689a;"></div>
<div class="b" style="left:2962.3px;top:1462.3px;width:10.4px;height:3.5px;background:#474c55;"></div>
<div class="b" style="left:2980.2px;top:1460.0px;width:15.0px;height:8.0px;background:#2c689a;"></div>
<div class="b" style="left:2982.5px;top:1462.3px;width:10.4px;height:3.5px;background:#474c55;"></div>
<div class="b" style="left:3000.4px;top:1460.0px;width:15.0px;height:8.0px;background:#2c689a;"></div>
<div class="b" style="left:3002.7px;top:1462.3px;width:10.4px;height:3.5px;background:#474c55;"></div>
<div class="b" style="left:3020.6px;top:1460.0px;width:15.0px;height:8.0px;background:#2c689a;"></div>
<div class="b" style="left:3022.9px;top:1462.3px;width:10.4px;height:3.5px;background:#474c55;"></div>
<div class="b" style="left:3040.8px;top:1460.0px;width:15.0px;height:8.0px;background:#2c689a;"></div>
<div class="b" style="left:3043.1px;top:1462.3px;width:10.4px;height:3.5px;background:#474c55;"></div>
<div class="b" style="left:3061.0px;top:1460.0px;width:15.0px;height:8.0px;background:#2c689a;"></div>
<div class="b" style="left:3063.3px;top:1462.3px;width:10.4px;height:3.5px;background:#474c55;"></div>
<div class="b" style="left:3081.2px;top:1460.0px;width:15.0px;height:8.0px;background:#2c689a;"></div>
<div class="b" style="left:3083.5px;top:1462.3px;width:10.4px;height:3.5px;background:#474c55;"></div>
<div class="b" style="left:2853.0px;top:1509.0px;width:243.0px;height:1.2px;background:#5a5a5a;"></div>
<div class="b" style="left:2864.4px;top:1510.0px;width:1.2px;height:4.0px;background:#5a5a5a;"></div>
<div class="t" style="left:2854.4px;top:1534.12px;font-size:19.95px;color:#858585;letter-spacing:-0.60px;transform:scaleX(0.9788);transform-origin:0 0;-webkit-text-stroke:0.22px #858585;">12</div>
<div class="b" style="left:2904.6px;top:1510.0px;width:1.2px;height:4.0px;background:#5a5a5a;"></div>
<div class="t" style="left:2894.6px;top:1534.12px;font-size:19.95px;color:#858585;letter-spacing:-0.60px;transform:scaleX(0.9788);transform-origin:0 0;-webkit-text-stroke:0.22px #858585;">14</div>
<div class="b" style="left:2944.8px;top:1510.0px;width:1.2px;height:4.0px;background:#5a5a5a;"></div>
<div class="t" style="left:2934.8px;top:1534.12px;font-size:19.95px;color:#858585;letter-spacing:-0.60px;transform:scaleX(0.9788);transform-origin:0 0;-webkit-text-stroke:0.22px #858585;">16</div>
<div class="b" style="left:2985.0px;top:1510.0px;width:1.2px;height:4.0px;background:#5a5a5a;"></div>
<div class="t" style="left:2975.0px;top:1534.12px;font-size:19.95px;color:#858585;letter-spacing:-0.60px;transform:scaleX(0.9788);transform-origin:0 0;-webkit-text-stroke:0.22px #858585;">18</div>
<div class="b" style="left:3025.2px;top:1510.0px;width:1.2px;height:4.0px;background:#5a5a5a;"></div>
<div class="t" style="left:3015.2px;top:1534.12px;font-size:19.95px;color:#858585;letter-spacing:-0.60px;transform:scaleX(0.9788);transform-origin:0 0;-webkit-text-stroke:0.22px #858585;">20</div>
<div class="b" style="left:3065.4px;top:1510.0px;width:1.2px;height:4.0px;background:#5a5a5a;"></div>
<div class="t" style="left:3055.4px;top:1534.12px;font-size:19.95px;color:#858585;letter-spacing:-0.60px;transform:scaleX(0.9788);transform-origin:0 0;-webkit-text-stroke:0.22px #858585;">22</div>
<svg class="b" style="left:3131.0px;top:1344.0px;" width="42.0" height="42.0" viewBox="0 0 42 42"><circle cx="21" cy="21" r="19.5" fill="#161a22" stroke="#6a6e76" stroke-width="1.5"/><g fill="none" stroke="#8a8f98" stroke-width="1.8"><path d="M11 16V11H16M12 12L17.5 17.5"/><path d="M31 16V11H26M30 12L24.5 17.5"/><path d="M11 26V31H16M12 30L17.5 24.5"/><path d="M31 26V31H26M30 30L24.5 24.5"/></g></svg>
<div class="b" style="left:3260px;top:1355px;width:66px;height:40px;overflow:hidden"><div class="t" style="left:8.8px;top:5.81px;font-size:20.58px;color:#808080;letter-spacing:-0.62px;transform:scaleX(0.9627);transform-origin:0 0;font-weight:700;-webkit-text-stroke:0.3px #808080;">Memory</div>
</div>
<div class="t" style="left:3173.8px;top:1390.12px;font-size:19.95px;color:#858585;letter-spacing:-0.60px;transform:scaleX(0.9879);transform-origin:0 0;-webkit-text-stroke:0.22px #858585;">100</div>
<div class="t" style="left:3184.4px;top:1441.12px;font-size:19.95px;color:#858585;letter-spacing:-0.60px;transform:scaleX(0.9788);transform-origin:0 0;-webkit-text-stroke:0.22px #858585;">50</div>
<div class="t" style="left:3194.9px;top:1491.12px;font-size:19.95px;color:#858585;transform:scaleX(0.9524);transform-origin:0 0;-webkit-text-stroke:0.22px #858585;">0</div>
<div class="t" style="left:3146px;top:1450px;font-size:17.5px;color:#858585;transform:rotate(-62deg)">%</div>
<div class="b" style="left:3228.0px;top:1409.0px;width:98.0px;height:1.6px;background:repeating-linear-gradient(90deg,#5a5d63 0 1.8px,transparent 1.8px 6px);"></div>
<div class="b" style="left:3228.0px;top:1460.0px;width:98.0px;height:1.6px;background:repeating-linear-gradient(90deg,#5a5d63 0 1.8px,transparent 1.8px 6px);"></div>
<div class="b" style="left:3231.0px;top:1413.5px;width:14.5px;height:9.0px;background:#4a7f4e;"></div>
<div class="b" style="left:3233.0px;top:1419.0px;width:10.5px;height:2.5px;background:#4b5058;"></div>
<div class="b" style="left:3238.0px;top:1411.8px;width:12.0px;height:2.8px;background:#a5670b;"></div>
<div class="b" style="left:3251.3px;top:1413.5px;width:14.5px;height:9.0px;background:#4a7f4e;"></div>
<div class="b" style="left:3253.3px;top:1419.0px;width:10.5px;height:2.5px;background:#4b5058;"></div>
<div class="b" style="left:3258.3px;top:1411.8px;width:12.0px;height:2.8px;background:#a5670b;"></div>
<div class="b" style="left:3271.6px;top:1413.5px;width:14.5px;height:9.0px;background:#4a7f4e;"></div>
<div class="b" style="left:3273.6px;top:1419.0px;width:10.5px;height:2.5px;background:#4b5058;"></div>
<div class="b" style="left:3278.6px;top:1411.8px;width:12.0px;height:2.8px;background:#a5670b;"></div>
<div class="b" style="left:3291.9px;top:1413.5px;width:14.5px;height:9.0px;background:#4a7f4e;"></div>
<div class="b" style="left:3293.9px;top:1419.0px;width:10.5px;height:2.5px;background:#4b5058;"></div>
<div class="b" style="left:3298.9px;top:1411.8px;width:12.0px;height:2.8px;background:#a5670b;"></div>
<div class="b" style="left:3312.2px;top:1413.5px;width:12.0px;height:9.0px;background:#4a7f4e;"></div>
<div class="b" style="left:3314.2px;top:1419.0px;width:8.0px;height:2.5px;background:#4b5058;"></div>
<div class="b" style="left:3319.2px;top:1411.8px;width:6.8px;height:2.8px;background:#a5670b;"></div>
<div class="b" style="left:3228.0px;top:1509.0px;width:98.0px;height:1.2px;background:#5a5a5a;"></div>
<div class="b" style="left:3237.1px;top:1510.0px;width:1.2px;height:4.0px;background:#5a5a5a;"></div>
<div class="t" style="left:3232.4px;top:1534.12px;font-size:19.95px;color:#858585;transform:scaleX(0.9524);transform-origin:0 0;-webkit-text-stroke:0.22px #858585;">0</div>
<div class="b" style="left:3277.3px;top:1510.0px;width:1.2px;height:4.0px;background:#5a5a5a;"></div>
<div class="t" style="left:3272.6px;top:1534.12px;font-size:19.95px;color:#858585;transform:scaleX(0.9524);transform-origin:0 0;-webkit-text-stroke:0.22px #858585;">2</div>
<div class="b" style="left:3317.5px;top:1510.0px;width:1.2px;height:4.0px;background:#5a5a5a;"></div>
<div class="t" style="left:3312.8px;top:1534.12px;font-size:19.95px;color:#858585;transform:scaleX(0.9524);transform-origin:0 0;-webkit-text-stroke:0.22px #858585;">4</div>
<div class="b" style="left:1280.4px;top:1610.8px;width:2045.1px;height:46.4px;border:1px solid #8f8f8f;border-radius:10px;box-sizing:border-box;"></div>
<div class="b" style="left:1459.8px;top:1622.0px;width:22.2px;height:22.0px;background:#1f4e7c;border-radius:5px;"></div>
<div class="t" style="left:1493.6px;top:1621.23px;font-size:23.73px;color:#8a8a8a;letter-spacing:-0.66px;-webkit-text-stroke:0.22px #8a8a8a;">Learned Pattern Models</div>
<div class="b" style="left:2016px;top:1634px;width:45px;height:0;border-top:2px dashed #8a1c2a"></div>
<div class="t" style="left:2072.0px;top:1621.23px;font-size:23.73px;color:#8a8a8a;letter-spacing:-0.71px;-webkit-text-stroke:0.22px #8a8a8a;">Average Limit</div>
<div class="b" style="left:2491px;top:1634px;width:45px;height:0;border-top:2px dashed #6a1c7a"></div>
<div class="t" style="left:2548.0px;top:1621.23px;font-size:23.73px;color:#8a8a8a;letter-spacing:-0.71px;-webkit-text-stroke:0.22px #8a8a8a;">Peak Limit</div>
<div class="b" style="left:2935.8px;top:1634px;width:45px;height:0;border-top:2px dashed #9a5a0a"></div>
<div class="t" style="left:2992.0px;top:1621.23px;font-size:23.73px;color:#8a8a8a;letter-spacing:-0.53px;-webkit-text-stroke:0.22px #8a8a8a;">Sustained Limit</div>
<div class="b" style="left:2058.6px;top:1692.0px;width:14.0px;height:14.0px;background:#9a9a9a;border-radius:7px;"></div>
<div class="b" style="left:2089.9px;top:1692.0px;width:14.0px;height:14.0px;background:#34373d;border-radius:7px;"></div>
<div class="t" style="left:2882.3px;top:1685.62px;font-size:24.15px;color:#7a7a7a;letter-spacing:-0.72px;transform:scaleX(0.9839);transform-origin:0 0;-webkit-text-stroke:0.22px #7a7a7a;">Slides Per View</div>
<div class="b" style="left:3050.5px;top:1674.0px;width:134.2px;height:49.0px;border:1px solid #262b33;border-radius:6px;box-sizing:border-box;"></div>
<div class="t" style="left:3071.9px;top:1685.62px;font-size:24.15px;color:#8a8a8a;transform:scaleX(0.9524);transform-origin:0 0;-webkit-text-stroke:0.22px #8a8a8a;">4</div>
<svg class="b" style="left:3150.5px;top:1695.0px;" width="14.0" height="8.0" viewBox="0 0 14 8"><path d="M0 0H14L7 7.5Z" fill="#3a3f47"/></svg>
<svg class="b" style="left:3216.0px;top:1688.0px;" width="16.0" height="22.0" viewBox="0 0 16 22"><path d="M12.5 2.5L4 11L12.5 19.5" fill="none" stroke="#3a3f47" stroke-width="2.4"/></svg>
<svg class="b" style="left:3286.0px;top:1688.0px;" width="16.0" height="22.0" viewBox="0 0 16 22"><path d="M3.5 2.5L12 11L3.5 19.5" fill="none" stroke="#8a8a8a" stroke-width="2.4"/></svg>
<div class="b" style="left:549.0px;top:218.0px;width:2304.0px;height:1354.0px;background:#1f2937;border-radius:11px;box-shadow:0 6px 30px rgba(0,0,0,.28);"></div>
<div class="t" style="left:585.5px;top:250.70px;font-size:27.2px;color:#f1f2f4;letter-spacing:0.34px;-webkit-text-stroke:0.22px #f1f2f4;">ec-prepro-rais-378</div>
<svg class="b" style="left:2785.7px;top:255.2px;" width="18.0" height="18.0" viewBox="0 0 18 18"><path d="M1.5 1.5L16.5 16.5M16.5 1.5L1.5 16.5" stroke="#fff" stroke-width="2" fill="none"/></svg>
<div class="b" style="left:1244.2px;top:333.0px;width:375.3px;height:64.0px;border:1px solid #4a5361;border-radius:6px;box-sizing:border-box;"></div>
<div class="b" style="left:1257.7px;top:331.0px;width:247.6px;height:5.0px;background:#1f2937;"></div>
<div class="t" style="left:1264.7px;top:326.70px;font-size:16.8px;color:#c9cdd3;letter-spacing:0.13px;-webkit-text-stroke:0.22px #c9cdd3;">Show instance types that are...</div>
<div class="t" style="left:1264.7px;top:354.42px;font-size:22.57px;color:#fff;letter-spacing:0.16px;-webkit-text-stroke:0.22px #fff;">Commonly used</div>
<svg class="b" style="left:1581.0px;top:360.6px;" width="15.0" height="9.0" viewBox="0 0 15 9"><path d="M0 0H15L7.5 8.2Z" fill="#fff"/></svg>
<div class="b" style="left:1636.3px;top:333.0px;width:375.3px;height:64.0px;border:1px solid #4a5361;border-radius:6px;box-sizing:border-box;"></div>
<div class="b" style="left:1649.8px;top:331.0px;width:158.5px;height:5.0px;background:#1f2937;"></div>
<div class="t" style="left:1656.8px;top:326.70px;font-size:16.8px;color:#c9cdd3;letter-spacing:0.15px;-webkit-text-stroke:0.22px #c9cdd3;">Processor Supplier</div>
<div class="t" style="left:1656.8px;top:354.42px;font-size:22.57px;color:#fff;letter-spacing:0.04px;-webkit-text-stroke:0.22px #fff;">Intel, +2 more</div>
<svg class="b" style="left:1973.1px;top:360.6px;" width="15.0" height="9.0" viewBox="0 0 15 9"><path d="M0 0H15L7.5 8.2Z" fill="#fff"/></svg>
<div class="b" style="left:2028.4px;top:333.0px;width:375.2px;height:64.0px;border:1px solid #4a5361;border-radius:6px;box-sizing:border-box;"></div>
<div class="b" style="left:2041.9px;top:331.0px;width:140.8px;height:5.0px;background:#1f2937;"></div>
<div class="t" style="left:2048.9px;top:326.70px;font-size:16.8px;color:#c9cdd3;letter-spacing:0.07px;-webkit-text-stroke:0.22px #c9cdd3;">Spend Tolerance</div>
<div class="t" style="left:2058.0px;top:354.42px;font-size:22.57px;color:#fff;letter-spacing:0.28px;-webkit-text-stroke:0.22px #fff;">5x more than optimal</div>
<svg class="b" style="left:2363.8px;top:360.6px;" width="15.0" height="9.0" viewBox="0 0 15 9"><path d="M0 0H15L7.5 8.2Z" fill="#fff"/></svg>
<div class="b" style="left:2420.5px;top:333.0px;width:375.2px;height:64.0px;border:1px solid #4a5361;border-radius:6px;box-sizing:border-box;"></div>
<div class="b" style="left:2434.0px;top:331.0px;width:223.0px;height:5.0px;background:#1f2937;"></div>
<div class="t" style="left:2441.0px;top:326.70px;font-size:16.8px;color:#c9cdd3;letter-spacing:0.17px;-webkit-text-stroke:0.22px #c9cdd3;">Highlight Instance Features</div>
<div class="t" style="left:2449.5px;top:354.42px;font-size:22.57px;color:#8e96a1;letter-spacing:0.14px;-webkit-text-stroke:0.22px #8e96a1;">Select features</div>
<svg class="b" style="left:2755.2px;top:360.6px;" width="15.0" height="9.0" viewBox="0 0 15 9"><path d="M0 0H15L7.5 8.2Z" fill="#fff"/></svg>
<div class="t" style="left:1392.6px;top:452.24px;font-size:19.32px;color:#fff;letter-spacing:-0.58px;transform:scaleX(0.9907);transform-origin:0 0;font-weight:700;-webkit-text-stroke:0.3px #fff;">Instance Type Analysis - EC2</div>
<div class="hm">
<div class="c" style="left:1541.3px;top:499.4px;background:#fdc87c;">14</div><div class="c" style="left:1830.6px;top:499.4px;background:#fbf476;">75</div><div class="c" style="left:1859.5px;top:499.4px;background:#fbf476;">75</div><div class="c" style="left:1888.4px;top:499.4px;background:#fbf476;">73</div><div class="c" style="left:1946.3px;top:499.4px;background:#fbf476;">75</div><div class="c" style="left:2004.1px;top:499.4px;background:#fbf476;">74</div><div class="c" style="left:2062.0px;top:499.4px;background:#fbf476;">73</div><div class="c" style="left:2119.8px;top:499.4px;background:#fbf476;">73</div><div class="c" style="left:2148.8px;top:499.4px;background:#fbf476;">73</div><div class="c" style="left:2177.7px;top:499.4px;background:#fbf476;">71</div><div class="c" style="left:2206.6px;top:499.4px;background:#fbf476;">67</div><div class="c" style="left:2235.5px;top:499.4px;background:#fdc87c;">16</div><div class="c" style="left:2264.5px;top:499.4px;background:#fdc87c;">20</div><div class="c" style="left:2293.4px;top:499.4px;background:#fdc87c;">20</div><div class="c" style="left:2322.3px;top:499.4px;background:#fdc87c;">17</div><div class="c" style="left:2351.2px;top:499.4px;background:#fdc87c;">14</div><div class="c" style="left:2380.2px;top:499.4px;background:#cccccc;"></div>
<div class="c" style="left:962.8px;top:526.5px;background:#fbf476;">69</div><div class="c" style="left:1657.0px;top:526.5px;background:#fbf476;">78</div><div class="c" style="left:1686.0px;top:526.5px;background:#fbf476;">77</div><div class="c" style="left:1714.9px;top:526.5px;background:#fbf476;">76</div><div class="c" style="left:1743.8px;top:526.5px;background:#fbf476;">74</div><div class="c" style="left:1772.7px;top:526.5px;background:#fbf476;">73</div><div class="c" style="left:1801.7px;top:526.5px;background:#fbf476;">66</div><div class="c" style="left:1830.6px;top:526.5px;background:#fbf476;">78</div><div class="c" style="left:1859.5px;top:526.5px;background:#fbf476;">77</div><div class="c" style="left:1888.4px;top:526.5px;background:#fbf476;">76</div><div class="c" style="left:2090.9px;top:526.5px;background:#fbf476;">73</div><div class="c" style="left:2119.8px;top:526.5px;background:#fbf476;">76</div><div class="c" style="left:2148.8px;top:526.5px;background:#fbf476;">76</div><div class="c" style="left:2177.7px;top:526.5px;background:#fbf476;">74</div>
<div class="c" style="left:1049.6px;top:553.7px;background:#fbf476;">79</div><div class="c" style="left:1078.5px;top:553.7px;background:#fbf476;">78</div><div class="c" style="left:1107.5px;top:553.7px;background:#fbf476;">78</div><div class="c" style="left:1165.3px;top:553.7px;background:#fbf476;">77</div><div class="c" style="left:1194.2px;top:553.7px;background:#fbf476;">76</div><div class="c" style="left:1223.2px;top:553.7px;background:#fbf476;">75</div><div class="c" style="left:1281.0px;top:553.7px;background:#fbf476;">72</div><div class="c" style="left:1338.8px;top:553.7px;background:#fbf476;">78</div><div class="c" style="left:1367.8px;top:553.7px;background:#fbf476;">76</div><div class="c" style="left:1396.7px;top:553.7px;background:#fbf476;">75</div><div class="c" style="left:1425.6px;top:553.7px;background:#fbf476;">79</div><div class="c" style="left:1454.6px;top:553.7px;background:#fbf476;">77</div><div class="c" style="left:1483.5px;top:553.7px;background:#fbf476;">75</div><div class="c" style="left:1541.3px;top:553.7px;background:#fdc87c;">20</div><div class="c" style="left:1657.0px;top:553.7px;background:#fbf476;">80</div><div class="c" style="left:1686.0px;top:553.7px;background:#fbf476;">79</div><div class="c" style="left:1714.9px;top:553.7px;background:#fbf476;">77</div><div class="c" style="left:1743.8px;top:553.7px;background:#fbf476;">76</div><div class="c" style="left:1772.7px;top:553.7px;background:#fbf476;">75</div><div class="c" style="left:1801.7px;top:553.7px;background:#fbf476;">68</div><div class="c" style="left:1830.6px;top:553.7px;background:#fbf476;">80</div><div class="c" style="left:1859.5px;top:553.7px;background:#fbf476;">79</div><div class="c" style="left:1888.4px;top:553.7px;background:#fbf476;">77</div><div class="c" style="left:1946.3px;top:553.7px;background:#fbf476;">80</div><div class="c" style="left:2004.1px;top:553.7px;background:#fbf476;">79</div><div class="c" style="left:2062.0px;top:553.7px;background:#fbf476;">77</div><div class="c" style="left:2119.8px;top:553.7px;background:#fbf476;">78</div><div class="c" style="left:2148.8px;top:553.7px;background:#fbf476;">77</div><div class="c" style="left:2177.7px;top:553.7px;background:#fbf476;">75</div><div class="c" style="left:2206.6px;top:553.7px;background:#fbf476;">72</div><div class="c" style="left:2235.5px;top:553.7px;background:#fdc87c;">21</div><div class="c" style="left:2264.5px;top:553.7px;background:#fdc87c;">26</div><div class="c" style="left:2293.4px;top:553.7px;background:#fdc87c;">25</div><div class="c" style="left:2322.3px;top:553.7px;background:#fdc87c;">23</div><div class="c" style="left:2351.2px;top:553.7px;background:#fdc87c;">19</div><div class="c" style="left:2380.2px;top:553.7px;background:#fdc87c;">20</div>
<div class="c" style="left:933.9px;top:580.8px;background:#fbf476;">83</div><div class="c" style="left:962.8px;top:580.8px;background:#fbf476;">74</div><div class="c" style="left:991.8px;top:580.8px;background:#fdc87c;">22</div><div class="c" style="left:1020.7px;top:580.8px;background:#fbf476;">77</div><div class="c" style="left:1107.5px;top:580.8px;background:#fbf476;">81</div><div class="c" style="left:1165.3px;top:580.8px;background:#fbf476;">80</div><div class="c" style="left:1194.2px;top:580.8px;background:#fbf476;">79</div><div class="c" style="left:1223.2px;top:580.8px;background:#fbf476;">78</div><div class="c" style="left:1309.9px;top:580.8px;background:#fdc87c;">25</div><div class="c" style="left:1338.8px;top:580.8px;background:#fbf476;">81</div><div class="c" style="left:1367.8px;top:580.8px;background:#fbf476;">79</div><div class="c" style="left:1396.7px;top:580.8px;background:#fbf476;">78</div><div class="c" style="left:1425.6px;top:580.8px;background:#fbf476;">82</div><div class="c" style="left:1454.6px;top:580.8px;background:#fbf476;">79</div><div class="c" style="left:1483.5px;top:580.8px;background:#fbf476;">78</div><div class="c" style="left:1541.3px;top:580.8px;background:#fdc87c;">25</div><div class="c" style="left:1599.2px;top:580.8px;background:#fdc87c;">29</div><div class="c" style="left:1628.1px;top:580.8px;background:#fdc87c;">27</div><div class="c" style="left:1657.0px;top:580.8px;background:#fbf476;">83</div><div class="c" style="left:1686.0px;top:580.8px;background:#fbf476;">82</div><div class="c" style="left:1714.9px;top:580.8px;background:#fbf476;">80</div><div class="c" style="left:1743.8px;top:580.8px;background:#fbf476;">79</div><div class="c" style="left:1772.7px;top:580.8px;background:#fbf476;">77</div><div class="c" style="left:1801.7px;top:580.8px;background:#fbf476;">71</div><div class="c" style="left:1830.6px;top:580.8px;background:#fbf476;">83</div><div class="c" style="left:1859.5px;top:580.8px;background:#fbf476;">82</div><div class="c" style="left:1888.4px;top:580.8px;background:#fbf476;">80</div><div class="c" style="left:1917.3px;top:580.8px;background:#fdc87c;">25</div><div class="c" style="left:1946.3px;top:580.8px;background:#fbf476;">82</div><div class="c" style="left:1975.2px;top:580.8px;background:#fbf476;">83</div><div class="c" style="left:2004.1px;top:580.8px;background:#fbf476;">82</div><div class="c" style="left:2033.1px;top:580.8px;background:#fbf476;">82</div><div class="c" style="left:2062.0px;top:580.8px;background:#fbf476;">80</div><div class="c" style="left:2090.9px;top:580.8px;background:#fbf476;">78</div><div class="c" style="left:2119.8px;top:580.8px;background:#fbf476;">81</div><div class="c" style="left:2148.8px;top:580.8px;background:#fbf476;">80</div><div class="c" style="left:2177.7px;top:580.8px;background:#fbf476;">78</div><div class="c" style="left:2235.5px;top:580.8px;background:#fdc87c;">26</div><div class="c" style="left:2264.5px;top:580.8px;background:#fdc87c;">29</div><div class="c" style="left:2293.4px;top:580.8px;background:#fdc87c;">28</div><div class="c" style="left:2322.3px;top:580.8px;background:#fdc87c;">26</div><div class="c" style="left:2351.2px;top:580.8px;background:#fdc87c;">22</div><div class="c" style="left:2380.2px;top:580.8px;background:#fdc87c;">23</div>
<div class="c" style="left:1049.6px;top:608.0px;background:#fbf476;">83</div><div class="c" style="left:1078.5px;top:608.0px;background:#fbf476;">83</div><div class="c" style="left:1107.5px;top:608.0px;background:#fbf476;">83</div><div class="c" style="left:1165.3px;top:608.0px;background:#fbf476;">82</div><div class="c" style="left:1194.2px;top:608.0px;background:#fbf476;">81</div><div class="c" style="left:1223.2px;top:608.0px;background:#fbf476;">80</div><div class="c" style="left:1252.1px;top:608.0px;background:#fbf476;">78</div><div class="c" style="left:1281.0px;top:608.0px;background:#fbf476;">76</div><div class="c" style="left:1309.9px;top:608.0px;background:#fdc87c;">26</div><div class="c" style="left:1338.8px;top:608.0px;background:#fbf476;">83</div><div class="c" style="left:1367.8px;top:608.0px;background:#fbf476;">81</div><div class="c" style="left:1396.7px;top:608.0px;background:#fbf476;">80</div><div class="c" style="left:1425.6px;top:608.0px;background:#fbf476;">84</div><div class="c" style="left:1454.6px;top:608.0px;background:#fbf476;">81</div><div class="c" style="left:1483.5px;top:608.0px;background:#fbf476;">80</div><div class="c" style="left:1512.4px;top:608.0px;background:#fbf476;">79</div><div class="c" style="left:1541.3px;top:608.0px;background:#fdc87c;">23</div><div class="c" style="left:1570.2px;top:608.0px;background:#fbf476;">73</div><div class="c" style="left:1599.2px;top:608.0px;background:#fdc87c;">31</div><div class="c" style="left:1628.1px;top:608.0px;background:#fdc87c;">29</div><div class="c" style="left:1657.0px;top:608.0px;background:#fbf476;">85</div><div class="c" style="left:1686.0px;top:608.0px;background:#fbf476;">84</div><div class="c" style="left:1714.9px;top:608.0px;background:#fbf476;">82</div><div class="c" style="left:1743.8px;top:608.0px;background:#fbf476;">81</div><div class="c" style="left:1772.7px;top:608.0px;background:#fbf476;">79</div><div class="c" style="left:1830.6px;top:608.0px;background:#fbf476;">85</div><div class="c" style="left:1859.5px;top:608.0px;background:#fbf476;">84</div><div class="c" style="left:1888.4px;top:608.0px;background:#fbf476;">82</div><div class="c" style="left:1917.3px;top:608.0px;background:#fdc87c;">28</div><div class="c" style="left:1946.3px;top:608.0px;background:#fbf476;">84</div><div class="c" style="left:1975.2px;top:608.0px;background:#fbf476;">85</div><div class="c" style="left:2004.1px;top:608.0px;background:#fbf476;">84</div><div class="c" style="left:2033.1px;top:608.0px;background:#fbf476;">84</div><div class="c" style="left:2062.0px;top:608.0px;background:#fbf476;">82</div><div class="c" style="left:2090.9px;top:608.0px;background:#fbf476;">79</div><div class="c" style="left:2119.8px;top:608.0px;background:#fbf476;">83</div><div class="c" style="left:2148.8px;top:608.0px;background:#fbf476;">82</div><div class="c" style="left:2177.7px;top:608.0px;background:#fbf476;">80</div><div class="c" style="left:2206.6px;top:608.0px;background:#fbf476;">77</div><div class="c" style="left:2235.5px;top:608.0px;background:#fdc87c;">24</div><div class="c" style="left:2264.5px;top:608.0px;background:#fdc87c;">31</div><div class="c" style="left:2293.4px;top:608.0px;background:#fdc87c;">30</div><div class="c" style="left:2322.3px;top:608.0px;background:#fdc87c;">28</div><div class="c" style="left:2351.2px;top:608.0px;background:#fdc87c;">24</div><div class="c" style="left:2380.2px;top:608.0px;background:#fdc87c;">25</div>
<div class="c" style="left:905.0px;top:635.1px;background:#fdc87c;">30</div><div class="c" style="left:962.8px;top:635.1px;background:#fbf476;">78</div><div class="c" style="left:991.8px;top:635.1px;background:#fdc87c;">28</div><div class="c" style="left:1020.7px;top:635.1px;background:#fbf476;">82</div><div class="c" style="left:1107.5px;top:635.1px;background:#a2cd7a;">85</div><div class="c" style="left:1165.3px;top:635.1px;background:#fbf476;">84</div><div class="c" style="left:1194.2px;top:635.1px;background:#fbf476;">83</div><div class="c" style="left:1223.2px;top:635.1px;background:#fbf476;">83</div><div class="c" style="left:1309.9px;top:635.1px;background:#fdc87c;">30</div><div class="c" style="left:1338.8px;top:635.1px;background:#9fcb7a;">86</div><div class="c" style="left:1367.8px;top:635.1px;background:#fbf476;">84</div><div class="c" style="left:1396.7px;top:635.1px;background:#fbf476;">83</div><div class="c" style="left:1425.6px;top:635.1px;background:#9fcb7a;">86</div><div class="c" style="left:1454.6px;top:635.1px;background:#fbf476;">84</div><div class="c" style="left:1483.5px;top:635.1px;background:#fbf476;">82</div><div class="c" style="left:1541.3px;top:635.1px;background:#fdc87c;">29</div><div class="c" style="left:1570.2px;top:635.1px;background:#fbf476;">76</div><div class="c" style="left:1599.2px;top:635.1px;background:#fdc87c;">35</div><div class="c" style="left:1628.1px;top:635.1px;background:#fdc87c;">32</div><div class="c" style="left:1657.0px;top:635.1px;background:#9cc979;">87</div><div class="c" style="left:1686.0px;top:635.1px;background:#9cc979;">87</div><div class="c" style="left:1714.9px;top:635.1px;background:#fbf476;">85</div><div class="c" style="left:1743.8px;top:635.1px;background:#fbf476;">84</div><div class="c" style="left:1772.7px;top:635.1px;background:#fbf476;">82</div><div class="c" style="left:1801.7px;top:635.1px;background:#fbf476;">76</div><div class="c" style="left:1830.6px;top:635.1px;background:#9cc979;">87</div><div class="c" style="left:1859.5px;top:635.1px;background:#9cc979;">87</div><div class="c" style="left:1888.4px;top:635.1px;background:#fbf476;">85</div><div class="c" style="left:1917.3px;top:635.1px;background:#fdc87c;">31</div><div class="c" style="left:1946.3px;top:635.1px;background:#9cc979;">87</div><div class="c" style="left:1975.2px;top:635.1px;background:#9cc979;">87</div><div class="c" style="left:2004.1px;top:635.1px;background:#9fcb7a;">86</div><div class="c" style="left:2033.1px;top:635.1px;background:#9cc979;">87</div><div class="c" style="left:2062.0px;top:635.1px;background:#fbf476;">84</div><div class="c" style="left:2090.9px;top:635.1px;background:#fbf476;">82</div><div class="c" style="left:2119.8px;top:635.1px;background:#fbf476;">85</div><div class="c" style="left:2148.8px;top:635.1px;background:#fbf476;">85</div><div class="c" style="left:2177.7px;top:635.1px;background:#fbf476;">83</div><div class="c" style="left:2235.5px;top:635.1px;background:#fdc87c;">30</div><div class="c" style="left:2264.5px;top:635.1px;background:#fdc87c;">34</div><div class="c" style="left:2293.4px;top:635.1px;background:#fdc87c;">33</div><div class="c" style="left:2322.3px;top:635.1px;background:#fdc87c;">31</div><div class="c" style="left:2351.2px;top:635.1px;background:#fdc87c;">27</div><div class="c" style="left:2380.2px;top:635.1px;background:#fdc87c;">28</div>
<div class="c" style="left:905.0px;top:662.2px;background:#f96a6e;">0</div><div class="c cur" style="left:932.7px;top:659.6px;background:#3d85d8;">93</div><div class="c" style="left:962.8px;top:662.2px;background:#fbf476;">83</div><div class="c" style="left:991.8px;top:662.2px;background:#fdc87c;">33</div><div class="c" style="left:1020.7px;top:662.2px;background:#9fcb7a;">86</div><div class="c" style="left:1049.6px;top:662.2px;background:#91c278;">91</div><div class="c" style="left:1078.5px;top:662.2px;background:#94c478;">90</div><div class="c" style="left:1107.5px;top:662.2px;background:#94c478;">90</div><div class="c" style="left:1136.4px;top:662.2px;background:#97c678;">89</div><div class="c" style="left:1165.3px;top:662.2px;background:#97c678;">89</div><div class="c" style="left:1194.2px;top:662.2px;background:#9ac879;">88</div><div class="c" style="left:1223.2px;top:662.2px;background:#9cc979;">87</div><div class="c" style="left:1309.9px;top:662.2px;background:#fdc87c;">35</div><div class="c" style="left:1338.8px;top:662.2px;background:#94c478;">90</div><div class="c" style="left:1367.8px;top:662.2px;background:#9ac879;">88</div><div class="c" style="left:1396.7px;top:662.2px;background:#9cc979;">87</div><div class="c" style="left:1425.6px;top:662.2px;background:#91c278;">91</div><div class="c" style="left:1454.6px;top:662.2px;background:#97c678;">89</div><div class="c" style="left:1483.5px;top:662.2px;background:#9cc979;">87</div><div class="c" style="left:1541.3px;top:662.2px;background:#fdc87c;">32</div><div class="c" style="left:1570.2px;top:662.2px;background:#fbf476;">80</div><div class="c" style="left:1599.2px;top:662.2px;background:#fdc87c;">40</div><div class="c" style="left:1628.1px;top:662.2px;background:#fdc87c;">38</div><div class="c" style="left:1657.0px;top:662.2px;background:#8ec077;">92</div><div class="c" style="left:1686.0px;top:662.2px;background:#91c278;">91</div><div class="c" style="left:1714.9px;top:662.2px;background:#97c678;">89</div><div class="c" style="left:1743.8px;top:662.2px;background:#9ac879;">88</div><div class="c" style="left:1772.7px;top:662.2px;background:#9cc979;">87</div><div class="c" style="left:1801.7px;top:662.2px;background:#fbf476;">80</div><div class="c" style="left:1830.6px;top:662.2px;background:#8ec077;">92</div><div class="c" style="left:1859.5px;top:662.2px;background:#91c278;">91</div><div class="c" style="left:1888.4px;top:662.2px;background:#97c678;">89</div><div class="c" style="left:1917.3px;top:662.2px;background:#fdc87c;">36</div><div class="c" style="left:1946.3px;top:662.2px;background:#8ec077;">92</div><div class="c" style="left:1975.2px;top:662.2px;background:#8ec077;">92</div><div class="c" style="left:2004.1px;top:662.2px;background:#91c278;">91</div><div class="c" style="left:2033.1px;top:662.2px;background:#91c278;">91</div><div class="c" style="left:2062.0px;top:662.2px;background:#97c678;">89</div><div class="c" style="left:2090.9px;top:662.2px;background:#9cc979;">87</div><div class="c" style="left:2119.8px;top:662.2px;background:#94c478;">90</div><div class="c" style="left:2148.8px;top:662.2px;background:#97c678;">89</div><div class="c" style="left:2177.7px;top:662.2px;background:#9cc979;">87</div><div class="c" style="left:2235.5px;top:662.2px;background:#fdc87c;">34</div><div class="c" style="left:2264.5px;top:662.2px;background:#fdc87c;">40</div><div class="c" style="left:2293.4px;top:662.2px;background:#fdc87c;">39</div><div class="c" style="left:2322.3px;top:662.2px;background:#fdc87c;">37</div><div class="c" style="left:2351.2px;top:662.2px;background:#fdc87c;">33</div><div class="c" style="left:2380.2px;top:662.2px;background:#fdc87c;">33</div>
<div class="c" style="left:760.4px;top:689.4px;background:#86bb76;">95</div><div class="c" style="left:789.3px;top:689.4px;background:#86bb76;">95</div><div class="c" style="left:818.2px;top:689.4px;background:#fdc87c;">48</div><div class="c" style="left:847.1px;top:689.4px;background:#fdc87c;">46</div><div class="c" style="left:876.1px;top:689.4px;background:#f96a6e;">0</div><div class="c" style="left:905.0px;top:689.4px;background:#f96a6e;">0</div><div class="c" style="left:933.9px;top:689.4px;background:#80b775;">97</div><div class="c" style="left:962.8px;top:689.4px;background:#fbf476;">88</div><div class="c" style="left:991.8px;top:689.4px;background:#fdc87c;">38</div><div class="c" style="left:1020.7px;top:689.4px;background:#91c278;">91</div><div class="c" style="left:1049.6px;top:689.4px;background:#f96a6e;">0</div><div class="c" style="left:1078.5px;top:689.4px;background:#f96a6e;">0</div><div class="c" style="left:1107.5px;top:689.4px;background:#86bb76;">95</div><div class="c" style="left:1136.4px;top:689.4px;background:#f96a6e;">0</div><div class="c" style="left:1165.3px;top:689.4px;background:#89bd76;">94</div><div class="c" style="left:1194.2px;top:689.4px;background:#8cbf77;">93</div><div class="c" style="left:1223.2px;top:689.4px;background:#8ec077;">92</div><div class="c" style="left:1252.1px;top:689.4px;background:#94c478;">90</div><div class="c" style="left:1281.0px;top:689.4px;background:#9ac879;">88</div><div class="c" style="left:1309.9px;top:689.4px;background:#fdc87c;">38</div><div class="c" style="left:1338.8px;top:689.4px;background:#86bb76;">95</div><div class="c" style="left:1367.8px;top:689.4px;background:#8cbf77;">93</div><div class="c" style="left:1396.7px;top:689.4px;background:#8ec077;">92</div><div class="c" style="left:1425.6px;top:689.4px;background:#f96a6e;">0</div><div class="c" style="left:1454.6px;top:689.4px;background:#8cbf77;">93</div><div class="c" style="left:1483.5px;top:689.4px;background:#8ec077;">92</div><div class="c" style="left:1512.4px;top:689.4px;background:#91c278;">91</div><div class="c" style="left:1541.3px;top:689.4px;background:#fdc87c;">34</div><div class="c" style="left:1570.2px;top:689.4px;background:#fbf476;">85</div><div class="c" style="left:1599.2px;top:689.4px;background:#fdc87c;">45</div><div class="c" style="left:1628.1px;top:689.4px;background:#fdc87c;">43</div><div class="c" style="left:1657.0px;top:689.4px;background:#f96a6e;">0</div><div class="c" style="left:1686.0px;top:689.4px;background:#83b976;">96</div><div class="c" style="left:1714.9px;top:689.4px;background:#89bd76;">94</div><div class="c" style="left:1743.8px;top:689.4px;background:#8cbf77;">93</div><div class="c" style="left:1772.7px;top:689.4px;background:#91c278;">91</div><div class="c" style="left:1801.7px;top:689.4px;background:#fbf476;">85</div><div class="c" style="left:1830.6px;top:689.4px;background:#f96a6e;">0</div><div class="c" style="left:1859.5px;top:689.4px;background:#83b976;">96</div><div class="c" style="left:1888.4px;top:689.4px;background:#89bd76;">94</div><div class="c" style="left:1917.3px;top:689.4px;background:#f96a6e;">0</div><div class="c" style="left:1946.3px;top:689.4px;background:#f96a6e;">0</div><div class="c" style="left:1975.2px;top:689.4px;background:#f96a6e;">0</div><div class="c" style="left:2004.1px;top:689.4px;background:#83b976;">96</div><div class="c" style="left:2033.1px;top:689.4px;background:#83b976;">96</div><div class="c" style="left:2062.0px;top:689.4px;background:#89bd76;">94</div><div class="c" style="left:2090.9px;top:689.4px;background:#91c278;">91</div><div class="c" style="left:2119.8px;top:689.4px;background:#f96a6e;">0</div><div class="c" style="left:2148.8px;top:689.4px;background:#89bd76;">94</div><div class="c" style="left:2177.7px;top:689.4px;background:#8ec077;">92</div><div class="c" style="left:2206.6px;top:689.4px;background:#9ac879;">88</div><div class="c" style="left:2235.5px;top:689.4px;background:#fdc87c;">36</div><div class="c" style="left:2264.5px;top:689.4px;background:#f96a6e;">0</div><div class="c" style="left:2293.4px;top:689.4px;background:#fdc87c;">44</div><div class="c" style="left:2322.3px;top:689.4px;background:#fdc87c;">42</div><div class="c" style="left:2351.2px;top:689.4px;background:#fdc87c;">38</div><div class="c" style="left:2380.2px;top:689.4px;background:#fdc87c;">39</div>
<div class="c" style="left:760.4px;top:716.5px;background:#f96a6e;">0</div><div class="c" style="left:789.3px;top:716.5px;background:#f96a6e;">0</div><div class="c" style="left:818.2px;top:716.5px;background:#f96a6e;">0</div><div class="c" style="left:847.1px;top:716.5px;background:#f96a6e;">0</div><div class="c" style="left:876.1px;top:716.5px;background:#f96a6e;">0</div><div class="c" style="left:905.0px;top:716.5px;background:#f96a6e;">0</div><div class="c" style="left:933.9px;top:716.5px;background:#f96a6e;">0</div><div class="c" style="left:962.8px;top:716.5px;background:#8ec077;">92</div><div class="c" style="left:991.8px;top:716.5px;background:#f96a6e;">0</div><div class="c" style="left:1020.7px;top:716.5px;background:#f96a6e;">0</div><div class="c" style="left:1049.6px;top:716.5px;background:#f96a6e;">0</div><div class="c" style="left:1078.5px;top:716.5px;background:#f96a6e;">0</div><div class="c" style="left:1107.5px;top:716.5px;background:#f96a6e;">0</div><div class="c" style="left:1136.4px;top:716.5px;background:#f96a6e;">0</div><div class="c" style="left:1165.3px;top:716.5px;background:#f96a6e;">0</div><div class="c" style="left:1194.2px;top:716.5px;background:#80b775;">97</div><div class="c" style="left:1223.2px;top:716.5px;background:#83b976;">96</div><div class="c" style="left:1252.1px;top:716.5px;background:#86bb76;">95</div><div class="c" style="left:1281.0px;top:716.5px;background:#8cbf77;">93</div><div class="c" style="left:1309.9px;top:716.5px;background:#f96a6e;">0</div><div class="c" style="left:1338.8px;top:716.5px;background:#f96a6e;">0</div><div class="c" style="left:1367.8px;top:716.5px;background:#7eb675;">98</div><div class="c" style="left:1396.7px;top:716.5px;background:#80b775;">97</div><div class="c" style="left:1425.6px;top:716.5px;background:#f96a6e;">0</div><div class="c" style="left:1454.6px;top:716.5px;background:#f96a6e;">0</div><div class="c" style="left:1483.5px;top:716.5px;background:#83b976;">96</div><div class="c" style="left:1512.4px;top:716.5px;background:#f96a6e;">0</div><div class="c" style="left:1541.3px;top:716.5px;background:#f96a6e;">0</div><div class="c" style="left:1599.2px;top:716.5px;background:#f96a6e;">0</div><div class="c sel" style="left:1626.1px;top:715.3px;background:#fdc87c;">49</div><div class="c" style="left:1657.0px;top:716.5px;background:#f96a6e;">0</div><div class="c" style="left:1686.0px;top:716.5px;background:#f96a6e;">0</div><div class="c cur" style="left:1712.7px;top:714.8px;width:31.4px;height:28.4px;line-height:21.4px;background:#1fbf0d;">99</div><div class="c" style="left:1743.8px;top:716.5px;background:#80b775;">97</div><div class="c" style="left:1772.7px;top:716.5px;background:#83b976;">96</div><div class="c" style="left:1801.7px;top:716.5px;background:#97c678;">89</div><div class="c" style="left:1830.6px;top:716.5px;background:#f96a6e;">0</div><div class="c" style="left:1859.5px;top:716.5px;background:#f96a6e;">0</div><div class="c" style="left:1888.4px;top:716.5px;background:#7eb675;">98</div><div class="c" style="left:1917.3px;top:716.5px;background:#f96a6e;">0</div><div class="c" style="left:1946.3px;top:716.5px;background:#f96a6e;">0</div><div class="c" style="left:1975.2px;top:716.5px;background:#f96a6e;">0</div><div class="c" style="left:2004.1px;top:716.5px;background:#f96a6e;">0</div><div class="c" style="left:2033.1px;top:716.5px;background:#f96a6e;">0</div><div class="c" style="left:2062.0px;top:716.5px;background:#7eb675;">98</div><div class="c" style="left:2090.9px;top:716.5px;background:#83b976;">96</div><div class="c" style="left:2119.8px;top:716.5px;background:#f96a6e;">0</div><div class="c" style="left:2148.8px;top:716.5px;background:#f96a6e;">0</div><div class="c" style="left:2177.7px;top:716.5px;background:#80b775;">97</div><div class="c" style="left:2206.6px;top:716.5px;background:#8cbf77;">93</div><div class="c" style="left:2235.5px;top:716.5px;background:#f96a6e;">0</div><div class="c" style="left:2264.5px;top:716.5px;background:#f96a6e;">0</div><div class="c" style="left:2293.4px;top:716.5px;background:#f96a6e;">0</div><div class="c" style="left:2322.3px;top:716.5px;background:#fdc87c;">47</div><div class="c" style="left:2351.2px;top:716.5px;background:#fdc87c;">43</div><div class="c" style="left:2380.2px;top:716.5px;background:#fdc87c;">44</div>
<div class="c" style="left:760.4px;top:743.7px;background:#f96a6e;">0</div><div class="c" style="left:789.3px;top:743.7px;background:#f96a6e;">0</div><div class="c" style="left:818.2px;top:743.7px;background:#f96a6e;">0</div><div class="c" style="left:847.1px;top:743.7px;background:#f96a6e;">0</div><div class="c" style="left:876.1px;top:743.7px;background:#f96a6e;">0</div><div class="c" style="left:905.0px;top:743.7px;background:#f96a6e;">0</div><div class="c" style="left:933.9px;top:743.7px;background:#f96a6e;">0</div><div class="c" style="left:991.8px;top:743.7px;background:#f96a6e;">0</div><div class="c" style="left:1020.7px;top:743.7px;background:#f96a6e;">0</div><div class="c" style="left:1049.6px;top:743.7px;background:#f96a6e;">0</div><div class="c" style="left:1078.5px;top:743.7px;background:#f96a6e;">0</div><div class="c" style="left:1107.5px;top:743.7px;background:#f96a6e;">0</div><div class="c" style="left:1136.4px;top:743.7px;background:#f96a6e;">0</div><div class="c" style="left:1165.3px;top:743.7px;background:#f96a6e;">0</div><div class="c" style="left:1194.2px;top:743.7px;background:#f96a6e;">0</div><div class="c" style="left:1223.2px;top:743.7px;background:#f96a6e;">0</div><div class="c" style="left:1252.1px;top:743.7px;background:#f96a6e;">0</div><div class="c" style="left:1281.0px;top:743.7px;background:#f96a6e;">0</div><div class="c" style="left:1338.8px;top:743.7px;background:#f96a6e;">0</div><div class="c" style="left:1367.8px;top:743.7px;background:#f96a6e;">0</div><div class="c" style="left:1396.7px;top:743.7px;background:#f96a6e;">0</div><div class="c" style="left:1425.6px;top:743.7px;background:#f96a6e;">0</div><div class="c" style="left:1454.6px;top:743.7px;background:#f96a6e;">0</div><div class="c" style="left:1483.5px;top:743.7px;background:#f96a6e;">0</div><div class="c" style="left:1512.4px;top:743.7px;background:#f96a6e;">0</div><div class="c" style="left:1599.2px;top:743.7px;background:#f96a6e;">0</div><div class="c" style="left:1628.1px;top:743.7px;background:#f96a6e;">0</div><div class="c" style="left:1657.0px;top:743.7px;background:#f96a6e;">0</div><div class="c" style="left:1686.0px;top:743.7px;background:#f96a6e;">0</div><div class="c" style="left:1714.9px;top:743.7px;background:#f96a6e;">0</div><div class="c" style="left:1743.8px;top:743.7px;background:#f96a6e;">0</div><div class="c" style="left:1772.7px;top:743.7px;background:#f96a6e;">0</div><div class="c" style="left:1830.6px;top:743.7px;background:#f96a6e;">0</div><div class="c" style="left:1859.5px;top:743.7px;background:#f96a6e;">0</div><div class="c" style="left:1888.4px;top:743.7px;background:#f96a6e;">0</div><div class="c" style="left:1917.3px;top:743.7px;background:#f96a6e;">0</div><div class="c" style="left:1946.3px;top:743.7px;background:#f96a6e;">0</div><div class="c" style="left:1975.2px;top:743.7px;background:#f96a6e;">0</div><div class="c" style="left:2004.1px;top:743.7px;background:#f96a6e;">0</div><div class="c" style="left:2033.1px;top:743.7px;background:#f96a6e;">0</div><div class="c" style="left:2062.0px;top:743.7px;background:#f96a6e;">0</div><div class="c" style="left:2090.9px;top:743.7px;background:#f96a6e;">0</div><div class="c" style="left:2119.8px;top:743.7px;background:#f96a6e;">0</div><div class="c" style="left:2148.8px;top:743.7px;background:#f96a6e;">0</div><div class="c" style="left:2177.7px;top:743.7px;background:#f96a6e;">0</div><div class="c" style="left:2206.6px;top:743.7px;background:#f96a6e;">0</div><div class="c" style="left:2264.5px;top:743.7px;background:#f96a6e;">0</div><div class="c" style="left:2293.4px;top:743.7px;background:#f96a6e;">0</div><div class="c" style="left:2322.3px;top:743.7px;background:#f96a6e;">0</div><div class="c" style="left:2351.2px;top:743.7px;background:#f96a6e;">0</div><div class="c" style="left:2380.2px;top:743.7px;background:#f96a6e;">0</div>
<div class="c" style="left:760.4px;top:770.8px;background:#f96a6e;">0</div><div class="c" style="left:789.3px;top:770.8px;background:#f96a6e;">0</div><div class="c" style="left:818.2px;top:770.8px;background:#f96a6e;">0</div><div class="c" style="left:847.1px;top:770.8px;background:#f96a6e;">0</div><div class="c" style="left:876.1px;top:770.8px;background:#f96a6e;">0</div><div class="c" style="left:1599.2px;top:770.8px;background:#f96a6e;">0</div><div class="c" style="left:1628.1px;top:770.8px;background:#f96a6e;">0</div><div class="c" style="left:1917.3px;top:770.8px;background:#f96a6e;">0</div><div class="c" style="left:2119.8px;top:770.8px;background:#f96a6e;">0</div><div class="c" style="left:2148.8px;top:770.8px;background:#f96a6e;">0</div><div class="c" style="left:2177.7px;top:770.8px;background:#f96a6e;">0</div><div class="c" style="left:2264.5px;top:770.8px;background:#f96a6e;">0</div><div class="c" style="left:2293.4px;top:770.8px;background:#f96a6e;">0</div><div class="c" style="left:2322.3px;top:770.8px;background:#f96a6e;">0</div><div class="c" style="left:2351.2px;top:770.8px;background:#f96a6e;">0</div>
<div class="c" style="left:760.4px;top:797.9px;background:#f96a6e;">0</div><div class="c" style="left:789.3px;top:797.9px;background:#f96a6e;">0</div><div class="c" style="left:818.2px;top:797.9px;background:#f96a6e;">0</div><div class="c" style="left:847.1px;top:797.9px;background:#f96a6e;">0</div>
<div class="c" style="left:760.4px;top:825.1px;background:#f96a6e;">0</div><div class="c" style="left:789.3px;top:825.1px;background:#f96a6e;">0</div><div class="c" style="left:818.2px;top:825.1px;background:#f96a6e;">0</div><div class="c" style="left:847.1px;top:825.1px;background:#f96a6e;">0</div>
<div class="c" style="left:760.4px;top:852.2px;background:#f96a6e;">0</div><div class="c" style="left:789.3px;top:852.2px;background:#f96a6e;">0</div><div class="c" style="left:818.2px;top:852.2px;background:#f96a6e;">0</div><div class="c" style="left:847.1px;top:852.2px;background:#f96a6e;">0</div>
</div>
<div class="b" style="left:759.6px;top:497.5px;width:1.0px;height:381.1px;background:#3a3f41;"></div>
<div class="b" style="left:759.6px;top:877.6px;width:1649.4px;height:1.0px;background:#3a3f41;"></div>
<div class="t" style="left:668.4px;top:504.05px;font-size:18.69px;color:#fff;letter-spacing:-0.44px;font-weight:500;-webkit-text-stroke:0.35px #fff;">48xlarge</div>
<div class="t" style="left:668.4px;top:531.19px;font-size:18.69px;color:#fff;letter-spacing:-0.44px;font-weight:500;-webkit-text-stroke:0.35px #fff;">32xlarge</div>
<div class="t" style="left:668.4px;top:558.33px;font-size:18.69px;color:#fff;letter-spacing:-0.44px;font-weight:500;-webkit-text-stroke:0.35px #fff;">24xlarge</div>
<div class="t" style="left:668.4px;top:585.47px;font-size:18.69px;color:#fff;letter-spacing:-0.44px;font-weight:500;-webkit-text-stroke:0.35px #fff;">16xlarge</div>
<div class="t" style="left:668.4px;top:612.62px;font-size:18.69px;color:#fff;letter-spacing:-0.44px;font-weight:500;-webkit-text-stroke:0.35px #fff;">12xlarge</div>
<div class="t" style="left:678.7px;top:639.75px;font-size:18.69px;color:#fff;letter-spacing:-0.50px;font-weight:500;-webkit-text-stroke:0.35px #fff;">8xlarge</div>
<div class="t" style="left:678.7px;top:666.89px;font-size:18.69px;color:#fff;letter-spacing:-0.50px;font-weight:500;-webkit-text-stroke:0.35px #fff;">4xlarge</div>
<div class="t" style="left:678.7px;top:694.03px;font-size:18.69px;color:#fff;letter-spacing:-0.50px;font-weight:500;-webkit-text-stroke:0.35px #fff;">2xlarge</div>
<div class="t" style="left:688.2px;top:721.17px;font-size:18.69px;color:#fff;letter-spacing:-0.42px;font-weight:500;-webkit-text-stroke:0.35px #fff;">xlarge</div>
<div class="t" style="left:697.7px;top:748.31px;font-size:18.69px;color:#fff;letter-spacing:-0.56px;font-weight:500;-webkit-text-stroke:0.35px #fff;">large</div>
<div class="t" style="left:671.3px;top:775.45px;font-size:18.69px;color:#fff;letter-spacing:-0.16px;font-weight:500;-webkit-text-stroke:0.35px #fff;">medium</div>
<div class="t" style="left:694.0px;top:802.60px;font-size:18.69px;color:#fff;letter-spacing:-0.15px;font-weight:500;-webkit-text-stroke:0.35px #fff;">small</div>
<div class="t" style="left:691.5px;top:829.73px;font-size:18.69px;color:#fff;letter-spacing:-0.05px;font-weight:500;-webkit-text-stroke:0.35px #fff;">micro</div>
<div class="t" style="left:697.0px;top:856.88px;font-size:18.69px;color:#fff;letter-spacing:-0.53px;font-weight:500;-webkit-text-stroke:0.35px #fff;">nano</div>
<div class="t rl" style="left:765.5px;top:906px;font-size:18.4px;-webkit-text-stroke:0.2px #fff;">t2</div>
<div class="t rl" style="left:794.4px;top:906px;font-size:18.4px;-webkit-text-stroke:0.2px #fff;">t3</div>
<div class="t rl" style="left:823.4px;top:906px;font-size:18.4px;-webkit-text-stroke:0.2px #fff;">t3a</div>
<div class="t rl" style="left:852.3px;top:906px;font-size:18.4px;-webkit-text-stroke:0.2px #fff;">t4g</div>
<div class="t rl" style="left:881.2px;top:906px;font-size:18.4px;-webkit-text-stroke:0.2px #fff;">m3</div>
<div class="t rl" style="left:910.1px;top:906px;font-size:18.4px;-webkit-text-stroke:0.2px #fff;">c4</div>
<div class="t rl" style="left:939.1px;top:906px;font-size:18.4px;-webkit-text-stroke:0.2px #fff;">m4</div>
<div class="t rl" style="left:968.0px;top:906px;font-size:18.4px;-webkit-text-stroke:0.2px #fff;">x1e</div>
<div class="t rl" style="left:996.9px;top:906px;font-size:18.4px;-webkit-text-stroke:0.2px #fff;">r4</div>
<div class="t rl" style="left:1025.8px;top:906px;font-size:18.4px;-webkit-text-stroke:0.2px #fff;">i3</div>
<div class="t rl" style="left:1054.8px;top:906px;font-size:18.4px;-webkit-text-stroke:0.2px #fff;">c5</div>
<div class="t rl" style="left:1083.7px;top:906px;font-size:18.4px;-webkit-text-stroke:0.2px #fff;">c5d</div>
<div class="t rl" style="left:1112.6px;top:906px;font-size:18.4px;-webkit-text-stroke:0.2px #fff;">m5</div>
<div class="t rl" style="left:1141.5px;top:906px;font-size:18.4px;-webkit-text-stroke:0.2px #fff;">c5n</div>
<div class="t rl" style="left:1170.5px;top:906px;font-size:18.4px;-webkit-text-stroke:0.2px #fff;">m5d</div>
<div class="t rl" style="left:1199.4px;top:906px;font-size:18.4px;-webkit-text-stroke:0.2px #fff;">r5</div>
<div class="t rl" style="left:1228.3px;top:906px;font-size:18.4px;-webkit-text-stroke:0.2px #fff;">r5d</div>
<div class="t rl" style="left:1257.2px;top:906px;font-size:18.4px;-webkit-text-stroke:0.2px #fff;">z1d</div>
<div class="t rl" style="left:1286.2px;top:906px;font-size:18.4px;-webkit-text-stroke:0.2px #fff;">i3en</div>
<div class="t rl" style="left:1315.1px;top:906px;font-size:18.4px;-webkit-text-stroke:0.2px #fff;">g4dn</div>
<div class="t rl" style="left:1344.0px;top:906px;font-size:18.4px;-webkit-text-stroke:0.2px #fff;">m5a</div>
<div class="t rl" style="left:1372.9px;top:906px;font-size:18.4px;-webkit-text-stroke:0.2px #fff;">r5a</div>
<div class="t rl" style="left:1401.9px;top:906px;font-size:18.4px;-webkit-text-stroke:0.2px #fff;">r5ad</div>
<div class="t rl" style="left:1430.8px;top:906px;font-size:18.4px;-webkit-text-stroke:0.2px #fff;">c5a</div>
<div class="t rl" style="left:1459.7px;top:906px;font-size:18.4px;-webkit-text-stroke:0.2px #fff;">m5n</div>
<div class="t rl" style="left:1488.6px;top:906px;font-size:18.4px;-webkit-text-stroke:0.2px #fff;">r5n</div>
<div class="t rl" style="left:1517.6px;top:906px;font-size:18.4px;-webkit-text-stroke:0.2px #fff;">m5zn</div>
<div class="t rl" style="left:1546.5px;top:906px;font-size:18.4px;-webkit-text-stroke:0.2px #fff;">g5</div>
<div class="t rl" style="left:1575.4px;top:906px;font-size:18.4px;-webkit-text-stroke:0.2px #fff;">x2iezn</div>
<div class="t rl" style="left:1604.3px;top:906px;font-size:18.4px;-webkit-text-stroke:0.2px #fff;">m6g</div>
<div class="t rl" style="left:1633.2px;top:906px;font-size:18.4px;-webkit-text-stroke:0.2px #fff;">r6g</div>
<div class="t rl" style="left:1662.2px;top:906px;font-size:18.4px;-webkit-text-stroke:0.2px #fff;">c6i</div>
<div class="t rl" style="left:1691.1px;top:906px;font-size:18.4px;-webkit-text-stroke:0.2px #fff;">m6i</div>
<div class="t rl" style="left:1720.0px;top:906px;font-size:18.4px;-webkit-text-stroke:0.2px #fff;">r6i</div>
<div class="t rl" style="left:1749.0px;top:906px;font-size:18.4px;-webkit-text-stroke:0.2px #fff;">r6id</div>
<div class="t rl" style="left:1777.9px;top:906px;font-size:18.4px;-webkit-text-stroke:0.2px #fff;">i4i</div>
<div class="t rl" style="left:1806.8px;top:906px;font-size:18.4px;-webkit-text-stroke:0.2px #fff;">x2iedn</div>
<div class="t rl" style="left:1835.7px;top:906px;font-size:18.4px;-webkit-text-stroke:0.2px #fff;">c6a</div>
<div class="t rl" style="left:1864.7px;top:906px;font-size:18.4px;-webkit-text-stroke:0.2px #fff;">m6a</div>
<div class="t rl" style="left:1893.6px;top:906px;font-size:18.4px;-webkit-text-stroke:0.2px #fff;">r6a</div>
<div class="t rl" style="left:1922.5px;top:906px;font-size:18.4px;-webkit-text-stroke:0.2px #fff;">c7gn</div>
<div class="t rl" style="left:1951.4px;top:906px;font-size:18.4px;-webkit-text-stroke:0.2px #fff;">c7i</div>
<div class="t rl" style="left:1980.4px;top:906px;font-size:18.4px;-webkit-text-stroke:0.2px #fff;">c7i-flex</div>
<div class="t rl" style="left:2009.3px;top:906px;font-size:18.4px;-webkit-text-stroke:0.2px #fff;">m7i</div>
<div class="t rl" style="left:2038.2px;top:906px;font-size:18.4px;-webkit-text-stroke:0.2px #fff;">m7i-flex</div>
<div class="t rl" style="left:2067.1px;top:906px;font-size:18.4px;-webkit-text-stroke:0.2px #fff;">r7i</div>
<div class="t rl" style="left:2096.1px;top:906px;font-size:18.4px;-webkit-text-stroke:0.2px #fff;">r7iz</div>
<div class="t rl" style="left:2125.0px;top:906px;font-size:18.4px;-webkit-text-stroke:0.2px #fff;">c7a</div>
<div class="t rl" style="left:2153.9px;top:906px;font-size:18.4px;-webkit-text-stroke:0.2px #fff;">m7a</div>
<div class="t rl" style="left:2182.8px;top:906px;font-size:18.4px;-webkit-text-stroke:0.2px #fff;">r7a</div>
<div class="t rl" style="left:2211.8px;top:906px;font-size:18.4px;-webkit-text-stroke:0.2px #fff;">i7ie</div>
<div class="t rl" style="left:2240.7px;top:906px;font-size:18.4px;-webkit-text-stroke:0.2px #fff;">g6</div>
<div class="t rl" style="left:2269.6px;top:906px;font-size:18.4px;-webkit-text-stroke:0.2px #fff;">c8g</div>
<div class="t rl" style="left:2298.5px;top:906px;font-size:18.4px;-webkit-text-stroke:0.2px #fff;">m8g</div>
<div class="t rl" style="left:2327.5px;top:906px;font-size:18.4px;-webkit-text-stroke:0.2px #fff;">r8g</div>
<div class="t rl" style="left:2356.4px;top:906px;font-size:18.4px;-webkit-text-stroke:0.2px #fff;">x8g</div>
<div class="t rl" style="left:2385.3px;top:906px;font-size:18.4px;-webkit-text-stroke:0.2px #fff;">i8g</div>
<div class="t rl" style="left:629.5px;top:634px;font-size:18.8px;letter-spacing:-0.2px;-webkit-text-stroke:0.2px #fff">Instance Size</div>
<div class="t" style="left:1520.5px;top:973.70px;font-size:18.4px;color:#fff;letter-spacing:-0.20px;-webkit-text-stroke:0.22px #fff;">Instance Family</div>
<div class="b" style="left:2448.9px;top:608.8px;width:22.1px;height:22.9px;background:#cccccc;"></div>
<div class="t" style="left:2494.4px;top:608.96px;font-size:22.68px;color:#e8eaed;letter-spacing:-0.16px;-webkit-text-stroke:0.22px #e8eaed;">Not available in region</div>
<div class="b" style="left:2448.9px;top:642.4px;width:22.1px;height:22.9px;background:#f96a6e;"></div>
<div class="t" style="left:2494.4px;top:642.56px;font-size:22.68px;color:#e8eaed;letter-spacing:-0.08px;-webkit-text-stroke:0.22px #e8eaed;">Insufficient Resources</div>
<div class="b" style="left:2448.9px;top:676.4px;width:22.1px;height:22.9px;background:#fdc87c;"></div>
<div class="t" style="left:2494.4px;top:676.56px;font-size:22.68px;color:#e8eaed;letter-spacing:0.07px;-webkit-text-stroke:0.22px #e8eaed;">Technically Incompatible</div>
<div class="b" style="left:2448.9px;top:710.3px;width:22.1px;height:22.9px;background:#fbf476;"></div>
<div class="t" style="left:2494.4px;top:710.46px;font-size:22.68px;color:#e8eaed;letter-spacing:-0.28px;-webkit-text-stroke:0.22px #e8eaed;">Outside Spend Tolerance</div>
<div class="b" style="left:2448.9px;top:743.9px;width:22.1px;height:22.9px;background:#7fb573;"></div>
<div class="t" style="left:2494.4px;top:744.06px;font-size:22.68px;color:#e8eaed;letter-spacing:0.02px;-webkit-text-stroke:0.22px #e8eaed;">Meets All Policies</div>
<div class="b" style="left:2448.9px;top:795.4px;width:181.3px;height:47.5px;border:1px solid #686b70;border-radius:24px;box-sizing:border-box;"></div>
<svg class="b" style="left:2469.5px;top:803.8px;" width="31.0" height="31.0" viewBox="0 0 31 31"><path d="M0.5 15C4 6.5 10 3 15.5 3C21 3 27 6.5 30.5 15C27 23.5 21 27 15.5 27C10 27 4 23.5 0.5 15Z" fill="#bcc0c7"/><circle cx="15.5" cy="15" r="6.6" fill="none" stroke="#1f2937" stroke-width="2.6"/><path d="M0.2 3.2L26.8 29.8" stroke="#1f2937" stroke-width="3" fill="none"/><path d="M2 1.4L28.8 28.2" stroke="#bcc0c7" stroke-width="2.4" fill="none"/></svg>
<div class="t" style="left:2513.7px;top:808.34px;font-size:19.53px;color:#fff;letter-spacing:-0.59px;transform:scaleX(0.9700);transform-origin:0 0;font-weight:500;-webkit-text-stroke:0.35px #fff;">Hide Scores</div>
<div class="b" style="left:608.2px;top:1050.4px;width:2186.2px;height:381.2px;border:1px solid #43484f;border-radius:7px;box-sizing:border-box;overflow:hidden;"></div>
<div class="b" style="left:609.2px;top:1051.4px;width:2184.2px;height:95.9px;background:#111827;border-radius:6px 6px 0 0;"></div>
<div class="b" style="left:870.7px;top:1148.3px;width:1922.7px;height:76.9px;background:#293241;"></div>
<div class="b" style="left:870.7px;top:1226.2px;width:1922.7px;height:74.1px;background:#293241;"></div>
<div class="b" style="left:870.7px;top:1301.3px;width:1922.7px;height:74.9px;background:#293241;"></div>
<div class="b" style="left:609.2px;top:1146.8px;width:2184.2px;height:1.5px;background:#444a54;"></div>
<div class="b" style="left:609.2px;top:1224.7px;width:2184.2px;height:1.5px;background:#444a54;"></div>
<div class="b" style="left:609.2px;top:1299.8px;width:2184.2px;height:1.5px;background:#444a54;"></div>
<div class="b" style="left:609.2px;top:1375.7px;width:2184.2px;height:1.5px;background:#444a54;"></div>
<div class="b" style="left:869.7px;top:1082.2px;width:2.0px;height:33.2px;background:#414958;"></div>
<div class="b" style="left:1095.0px;top:1082.2px;width:2.0px;height:33.2px;background:#414958;"></div>
<div class="b" style="left:1395.0px;top:1082.2px;width:2.0px;height:33.2px;background:#414958;"></div>
<div class="b" style="left:1860.6px;top:1082.2px;width:2.0px;height:33.2px;background:#414958;"></div>
<div class="b" style="left:2326.5px;top:1082.2px;width:2.0px;height:33.2px;background:#414958;"></div>
<div class="b" style="left:2791.6px;top:1082.2px;width:2.0px;height:33.2px;background:#414958;"></div>
<div class="t" style="left:886.2px;top:1088.07px;font-size:22.05px;color:#fff;letter-spacing:-0.66px;transform:scaleX(0.9601);transform-origin:0 0;-webkit-text-stroke:0.22px #fff;">Instance Type</div>
<div class="t" style="left:1111.0px;top:1088.07px;font-size:22.05px;color:#fff;letter-spacing:-0.66px;transform:scaleX(0.9394);transform-origin:0 0;-webkit-text-stroke:0.22px #fff;">Overall Result</div>
<div class="t" style="left:1411.0px;top:1088.28px;font-size:21.63px;color:#fff;letter-spacing:-0.65px;transform:scaleX(0.9201);transform-origin:0 0;font-weight:700;-webkit-text-stroke:0.3px #fff;">Within Spend Tolerance</div>
<svg class="b" style="left:1652.0px;top:1089.6px;" width="12.0" height="18.0" viewBox="0 0 12 18"><path d="M2 2L9.5 9L2 16" fill="none" stroke="#fff" stroke-width="2.6"/></svg>
<div class="t" style="left:1877.0px;top:1088.28px;font-size:21.63px;color:#fff;letter-spacing:-0.65px;transform:scaleX(0.9321);transform-origin:0 0;font-weight:700;-webkit-text-stroke:0.3px #fff;">Technically Compatible</div>
<svg class="b" style="left:2116.0px;top:1089.6px;" width="12.0" height="18.0" viewBox="0 0 12 18"><path d="M2 2L9.5 9L2 16" fill="none" stroke="#fff" stroke-width="2.6"/></svg>
<div class="t" style="left:2342.8px;top:1088.28px;font-size:21.63px;color:#fff;letter-spacing:-0.65px;transform:scaleX(0.9278);transform-origin:0 0;font-weight:700;-webkit-text-stroke:0.3px #fff;">Sufficient Resources</div>
<svg class="b" style="left:2559.0px;top:1089.6px;" width="12.0" height="18.0" viewBox="0 0 12 18"><path d="M2 2L9.5 9L2 16" fill="none" stroke="#fff" stroke-width="2.6"/></svg>
<div class="t" style="left:620.6px;top:1175.77px;font-size:22.05px;color:#fff;letter-spacing:-0.66px;transform:scaleX(0.8948);transform-origin:0 0;font-weight:700;-webkit-text-stroke:0.3px #fff;">Current</div>
<div class="bd" style="left:700.3px;top:1168px;background:#3d85d8;border:4px solid #0b3d0b;">93</div>
<div class="t" style="left:883.0px;top:1171.37px;font-size:22.05px;color:#f1f2f4;letter-spacing:-0.66px;transform:scaleX(0.9658);transform-origin:0 0;-webkit-text-stroke:0.22px #f1f2f4;">m4.4xlarge</div>
<div class="t" style="left:1108.3px;top:1171.37px;font-size:22.05px;color:#f1f2f4;letter-spacing:-0.66px;transform:scaleX(0.9886);transform-origin:0 0;-webkit-text-stroke:0.22px #f1f2f4;">Meets All Policies</div>
<svg class="b" style="left:1410.8px;top:1172.7px;" width="28.0" height="28.0" viewBox="0 0 28 28"><circle cx="14" cy="14" r="14" fill="#4ade80"/><path d="M8.6 14.6L12.4 18.2L19.6 10.4" fill="none" stroke="#1f2937" stroke-width="2.2" stroke-linecap="round" stroke-linejoin="round"/></svg>
<div class="t" style="left:1447.8px;top:1176.27px;font-size:22.05px;color:#f1f2f4;letter-spacing:-0.66px;transform:scaleX(0.9520);transform-origin:0 0;-webkit-text-stroke:0.22px #f1f2f4;">$452.42</div>
<svg class="b" style="left:2080.6px;top:1170.7px;" width="28.0" height="28.0" viewBox="0 0 28 28"><circle cx="14" cy="14" r="14" fill="#4ade80"/><path d="M8.6 14.6L12.4 18.2L19.6 10.4" fill="none" stroke="#1f2937" stroke-width="2.2" stroke-linecap="round" stroke-linejoin="round"/></svg>
<svg class="b" style="left:2546.4px;top:1170.7px;" width="28.0" height="28.0" viewBox="0 0 28 28"><circle cx="14" cy="14" r="14" fill="#4ade80"/><path d="M8.6 14.6L12.4 18.2L19.6 10.4" fill="none" stroke="#1f2937" stroke-width="2.2" stroke-linecap="round" stroke-linejoin="round"/></svg>
<div class="t" style="left:620.6px;top:1251.07px;font-size:22.05px;color:#fff;letter-spacing:-0.66px;transform:scaleX(0.8914);transform-origin:0 0;font-weight:700;-webkit-text-stroke:0.3px #fff;">Recommended</div>
<div class="bd" style="left:768px;top:1243.7px;background:#1fbf0d;border:4px solid #0b3d0b;">99</div>
<div class="t" style="left:883.0px;top:1247.47px;font-size:22.05px;color:#f1f2f4;letter-spacing:-0.66px;transform:scaleX(0.9771);transform-origin:0 0;-webkit-text-stroke:0.22px #f1f2f4;">r6i.xlarge</div>
<div class="t" style="left:1108.3px;top:1247.47px;font-size:22.05px;color:#f1f2f4;letter-spacing:-0.66px;transform:scaleX(0.9886);transform-origin:0 0;-webkit-text-stroke:0.22px #f1f2f4;">Meets All Policies</div>
<svg class="b" style="left:1410.8px;top:1247.9px;" width="28.0" height="28.0" viewBox="0 0 28 28"><circle cx="14" cy="14" r="14" fill="#4ade80"/><path d="M8.6 14.6L12.4 18.2L19.6 10.4" fill="none" stroke="#1f2937" stroke-width="2.2" stroke-linecap="round" stroke-linejoin="round"/></svg>
<div class="t" style="left:1447.8px;top:1252.07px;font-size:22.05px;color:#f1f2f4;letter-spacing:-0.66px;transform:scaleX(0.9348);transform-origin:0 0;-webkit-text-stroke:0.22px #f1f2f4;">$142.51</div>
<svg class="b" style="left:2080.6px;top:1246.6px;" width="28.0" height="28.0" viewBox="0 0 28 28"><circle cx="14" cy="14" r="14" fill="#4ade80"/><path d="M8.6 14.6L12.4 18.2L19.6 10.4" fill="none" stroke="#1f2937" stroke-width="2.2" stroke-linecap="round" stroke-linejoin="round"/></svg>
<svg class="b" style="left:2546.4px;top:1246.6px;" width="28.0" height="28.0" viewBox="0 0 28 28"><circle cx="14" cy="14" r="14" fill="#4ade80"/><path d="M8.6 14.6L12.4 18.2L19.6 10.4" fill="none" stroke="#1f2937" stroke-width="2.2" stroke-linecap="round" stroke-linejoin="round"/></svg>
<div class="t" style="left:620.6px;top:1327.07px;font-size:22.05px;color:#fff;letter-spacing:-0.66px;transform:scaleX(0.9109);transform-origin:0 0;font-weight:700;-webkit-text-stroke:0.3px #fff;">Selected</div>
<div class="bd" style="left:711.4px;top:1319px;background:#fdc87c;border:3px solid #1515f5;line-height:32px">49</div>
<div class="t" style="left:883.0px;top:1322.77px;font-size:22.05px;color:#f1f2f4;letter-spacing:-0.66px;transform:scaleX(0.9663);transform-origin:0 0;-webkit-text-stroke:0.22px #f1f2f4;">r6g.xlarge</div>
<div class="t" style="left:1108.3px;top:1322.77px;font-size:22.05px;color:#f1f2f4;letter-spacing:-0.66px;transform:scaleX(0.9907);transform-origin:0 0;-webkit-text-stroke:0.22px #f1f2f4;">Technically Incompatible</div>
<svg class="b" style="left:1410.8px;top:1324.0px;" width="28.0" height="28.0" viewBox="0 0 28 28"><circle cx="14" cy="14" r="14" fill="#4ade80"/><path d="M8.6 14.6L12.4 18.2L19.6 10.4" fill="none" stroke="#1f2937" stroke-width="2.2" stroke-linecap="round" stroke-linejoin="round"/></svg>
<div class="t" style="left:1447.8px;top:1328.07px;font-size:22.05px;color:#f1f2f4;letter-spacing:-0.66px;transform:scaleX(0.9554);transform-origin:0 0;-webkit-text-stroke:0.22px #f1f2f4;">$114.01</div>
<svg class="b" style="left:2080.6px;top:1321.6px;" width="28.0" height="28.0" viewBox="0 0 28 28"><circle cx="14" cy="14" r="14" fill="#f87171"/><path d="M10.2 10.2L17.8 17.8M17.8 10.2L10.2 17.8" fill="none" stroke="#1f2937" stroke-width="2.2" stroke-linecap="round"/></svg>
<svg class="b" style="left:2546.4px;top:1321.6px;" width="28.0" height="28.0" viewBox="0 0 28 28"><circle cx="14" cy="14" r="14" fill="#4ade80"/><path d="M8.6 14.6L12.4 18.2L19.6 10.4" fill="none" stroke="#1f2937" stroke-width="2.2" stroke-linecap="round" stroke-linejoin="round"/></svg>
<div class="b" style="left:2625.3px;top:1508.0px;width:215.7px;height:51.8px;background:#6883aa;border-radius:6px;box-shadow:0 2px 4px rgba(0,0,0,.4);"></div>
<div class="t" style="left:2650.0px;top:1525.33px;font-size:19.53px;color:#fff;letter-spacing:-0.25px;font-weight:500;-webkit-text-stroke:0.3px #fff;">VIEW DETAILS</div>
<svg class="b" style="left:2796.5px;top:1521.5px;" width="26.0" height="23.0" viewBox="0 0 26 23"><path d="M1.5 11.5H24M14.2 1.8L24 11.5L14.2 21.2" fill="none" stroke="#fff" stroke-width="2"/></svg>
</div></div>
</body></html>
